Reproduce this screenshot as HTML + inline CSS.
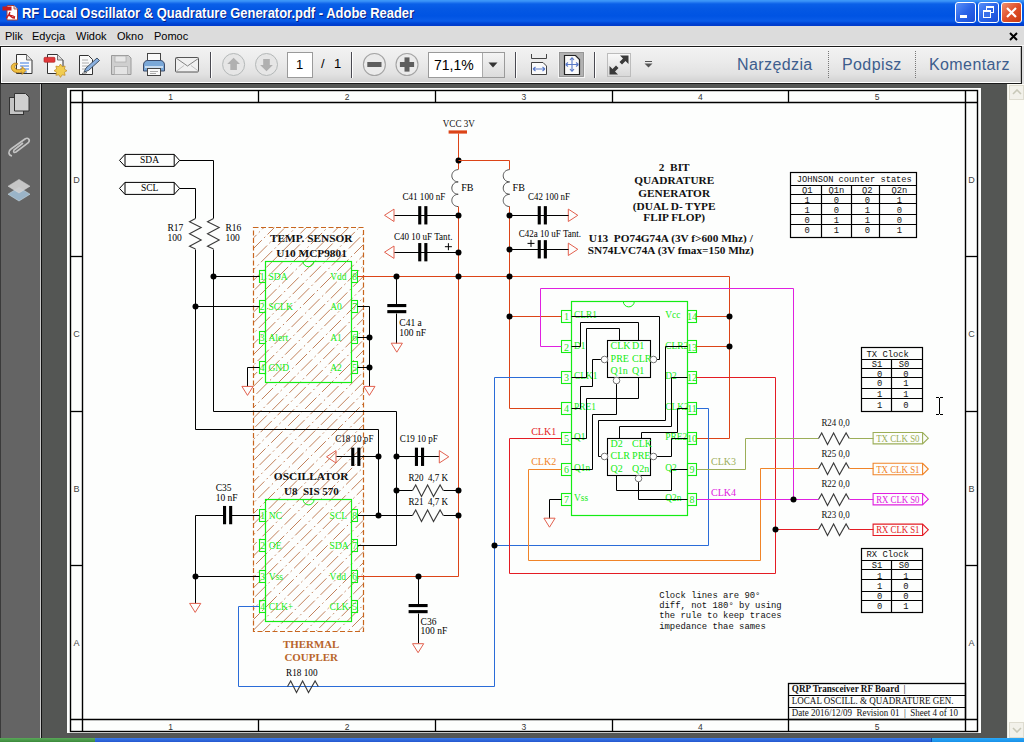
<!DOCTYPE html>
<html><head><meta charset="utf-8">
<style>
html,body{margin:0;padding:0;width:1024px;height:742px;overflow:hidden;background:#545654;font-family:"Liberation Sans",sans-serif;}
.abs{position:absolute;}
#title{left:0;top:0;width:1024px;height:26px;background:linear-gradient(#3c96f8 0px,#3c96f8 1px,#2a80f2 2px,#0a60e8 4px,#0458e4 9px,#0054e3 16px,#0a5ce8 21px,#0048d8 23px,#003ccc 25px,#003ccc 26px);}
#title .t{left:22px;top:5px;color:#fff;font-weight:bold;font-size:14px;text-shadow:1px 1px 0 #0a1e80;white-space:nowrap;transform:scaleX(0.926);transform-origin:0 0;}
#menu{left:0;top:26px;width:1024px;height:19px;background:#dcdcdc;}
#menu span{position:absolute;top:4px;font-size:11px;color:#000;}
#tbw{left:0;top:45px;width:1024px;height:1px;background:#f6f6f6;}
#tb{left:0;top:46px;width:1022px;height:38px;background:linear-gradient(#f2f2f2 0,#ebebeb 40%,#e2e2e2 75%,#d0d0d0 100%);border:1px solid #1a1a1a;box-sizing:border-box;}
#tbin{left:1px;top:47px;width:1020px;height:36px;border:1px solid #fff;border-right-color:#bbb;box-sizing:border-box;}
#left{left:0;top:84px;width:40px;height:654px;background:#646464;}
#leftl{left:40px;top:84px;width:1px;height:654px;background:#c8c8c8;}
#leftk{left:41px;top:84px;width:1px;height:654px;background:#111;}
#page{left:67px;top:88px;width:914px;height:645px;background:#fdfefd;}
#sb{left:1007px;top:84px;width:17px;height:654px;background:#fcfcf6;border-left:1px solid #eeeee6;box-sizing:border-box;}
#task{left:0;top:738px;width:1024px;height:4px;background:linear-gradient(#3a7ae8,#2458d0);}
#start{left:0;top:738px;width:95px;height:4px;background:linear-gradient(#5aa85a,#3a8a3a);}
.sep{position:absolute;top:52px;width:1px;height:26px;background:#4a4a52;border-right:1px solid #fff;}
.dsep{position:absolute;top:51px;width:0;height:27px;border-left:1px dotted #777;}
.rt{position:absolute;top:56px;font-size:16px;letter-spacing:0.4px;color:#3d5d8d;}
</style></head><body>
<div id="title" class="abs">
  <svg class="abs" style="left:2px;top:4px" width="17" height="17" viewBox="0 0 17 17">
    <path d="M5 1.5h7l3.5 3.5v11h-10.5z" fill="#fff" stroke="#a04040" stroke-width="1"/>
    <path d="M12 1.5v3.5h3.5" fill="#ddd" stroke="#a04040" stroke-width="0.8"/>
    <rect x="0.5" y="2.5" width="9" height="4" fill="#c81a1a"/>
    <path d="M7 9c1 4 3 5 6 5M8 8c-1 3-2 5-4 6M5 12c3-1 5-1 8 1" fill="none" stroke="#c81a1a" stroke-width="1.3"/>
  </svg>
  <div class="t abs">RF Local Oscillator &amp; Quadrature Generator.pdf - Adobe Reader</div>
  <!-- window buttons -->
  <div class="abs" style="left:955px;top:2px;width:21px;height:21px;border:1px solid #fff;border-radius:3px;box-sizing:border-box;background:linear-gradient(135deg,#5a90f8,#2a64e8 50%,#1a4ed8);">
    <div class="abs" style="left:4px;top:12px;width:7px;height:3px;background:#fff"></div>
  </div>
  <div class="abs" style="left:978px;top:2px;width:21px;height:21px;border:1px solid #fff;border-radius:3px;box-sizing:border-box;background:linear-gradient(135deg,#5a90f8,#2a64e8 50%,#1a4ed8);">
    <div class="abs" style="left:7px;top:3px;width:8px;height:7px;border:1px solid #fff;border-top-width:2px;box-sizing:border-box"></div>
    <div class="abs" style="left:4px;top:7px;width:8px;height:8px;border:1px solid #fff;border-top-width:2px;box-sizing:border-box;background:#3a70ea"></div>
  </div>
  <div class="abs" style="left:1001px;top:2px;width:21px;height:21px;border:1px solid #fff;border-radius:3px;box-sizing:border-box;background:linear-gradient(135deg,#f09070,#e0502a 50%,#c83a10);">
    <svg class="abs" style="left:3px;top:3px" width="13" height="13"><path d="M2 2L11 11M11 2L2 11" stroke="#fff" stroke-width="2.2"/></svg>
  </div>
</div>
<div id="menu" class="abs">
  <span style="left:5px">Plik</span><span style="left:32px">Edycja</span><span style="left:76px">Widok</span><span style="left:117px">Okno</span><span style="left:154px">Pomoc</span>
  <svg class="abs" style="left:1009px;top:6px" width="9" height="9"><path d="M1 1L8 8M8 1L1 8" stroke="#000" stroke-width="2"/></svg>
</div>
<div class="abs" style="left:0;top:45px;width:1024px;height:39px;background:#dedede"></div>
<div id="tbw" class="abs"></div>
<div id="tb" class="abs"></div>
<div id="tbin" class="abs"></div>
<!-- toolbar icons -->
<svg class="abs" style="left:0;top:46px" width="1024" height="38" viewBox="0 46 1024 38">
  <!-- open -->
  <path d="M16.5 54.5h10l5.5 5.5v13.5h-15.5z" fill="#fafafa" stroke="#333" stroke-width="1"/>
  <path d="M26.5 54.5v5.5h5.5" fill="#ddd" stroke="#555" stroke-width="0.8"/>
  <path d="M20 63h9M20 66h9M20 69h9M21 72h6" stroke="#3a7ae0" stroke-width="1.1"/>
  <path d="M15 63c-4 1-5 5-2 8 2 2 6 2 9 1v2.5l4-4-4-4v2.5c-3 1-6 1-7-1-1-2 1-4 3-4z" fill="#f0c040" stroke="#b07818" stroke-width="0.8"/>
  <!-- create -->
  <path d="M47.5 54.5h10l5.5 5.5v13.5h-15.5z" fill="#fafafa" stroke="#333" stroke-width="1"/>
  <path d="M57.5 54.5v5.5h5.5" fill="#ddd" stroke="#555" stroke-width="0.8"/>
  <rect x="44" y="57.3" width="11" height="5" rx="1" fill="#e0383a" stroke="#a82020" stroke-width="0.6"/>
  <path d="M60.5 64l1.6 2.6 3-0.5-0.7 3 2.6 1.6-2.6 1.6 0.7 3-3-0.5-1.6 2.6-1.6-2.6-3 0.5 0.7-3-2.6-1.6 2.6-1.6-0.7-3 3 0.5z" fill="#f0cc50" stroke="#c08a20" stroke-width="0.7"/>
  <!-- edit -->
  <path d="M79.5 55.5h9l4 4v15h-13z" fill="#fafafa" stroke="#333" stroke-width="1"/>
  <path d="M82 60h6M82 63h7M82 66h6M82 69h5" stroke="#999" stroke-width="0.8"/>
  <path d="M84 72l2-4 11-10 2.5 2.5-11 10z" fill="#8ab0e0" stroke="#345" stroke-width="0.9"/>
  <path d="M82 73.5c2-1 3 0 5-1" stroke="#333" stroke-width="0.8" fill="none"/>
  <!-- save disabled -->
  <path d="M111.5 55.5h17l2.5 2.5v16.5h-19.5z" fill="#cfcfcf" stroke="#9a9a9a" stroke-width="1"/>
  <rect x="115" y="56" width="11" height="6" fill="#e8e8e8" stroke="#aaa" stroke-width="0.7"/>
  <rect x="114.5" y="66.5" width="13" height="8" fill="#e4e4e4" stroke="#aaa" stroke-width="0.7"/>
  <!-- print -->
  <rect x="147.5" y="53.5" width="13" height="8" fill="#fafafa" stroke="#444" stroke-width="1"/>
  <path d="M143.5 65c0-3 2-4.5 4-4.5h13c2 0 4 1.5 4 4.5v6h-21z" fill="#7aa8d8" stroke="#3a4a6a" stroke-width="1"/>
  <rect x="145" y="66" width="18" height="2" fill="#c8dcf0"/>
  <rect x="147.5" y="68.5" width="13" height="7" fill="#fafafa" stroke="#444" stroke-width="1"/>
  <path d="M150 71.5h8M150 73.5h6" stroke="#888" stroke-width="0.7"/>
  <!-- mail -->
  <rect x="175.5" y="57.5" width="23" height="14.5" rx="1" fill="#f0f0f0" stroke="#555" stroke-width="1"/>
  <path d="M176 58l11.5 8 11.5-8" fill="none" stroke="#777" stroke-width="0.9"/>
  <path d="M176 71.5l8-6M199 71.5l-8-6" fill="none" stroke="#aaa" stroke-width="0.7"/>
  <!-- nav circles -->
  <circle cx="233.6" cy="64.5" r="11" fill="#e6e6e6" stroke="#b4b8b8" stroke-width="1"/>
  <path d="M233.6 57.8l-6.4 6.2h3.1v6h6.6v-6h3.1z" fill="#b0b0b0"/>
  <circle cx="266.5" cy="64.5" r="11" fill="#e6e6e6" stroke="#b4b8b8" stroke-width="1"/>
  <path d="M266.5 71.2l-6.4-6.2h3.1v-6h6.6v6h3.1z" fill="#b0b0b0"/>
  <!-- zoom circles -->
  <circle cx="374.4" cy="64.5" r="11" fill="#ebebeb" stroke="#a4a4a4" stroke-width="1.1"/>
  <rect x="367.3" y="62" width="14.2" height="5" fill="#5e5e5e"/>
  <circle cx="407" cy="64.5" r="11" fill="#ebebeb" stroke="#a4a4a4" stroke-width="1.1"/>
  <rect x="399.9" y="62" width="14.2" height="5" fill="#5e5e5e"/>
  <rect x="404.5" y="57.4" width="5" height="14.2" fill="#5e5e5e"/>
  <!-- fit width -->
  <path d="M531.5 54v4.5h15v-4.5" fill="none" stroke="#444" stroke-width="1"/>
  <path d="M531.5 74.5v-12h11.5l3.5 3.5v8.5z" fill="#fafafa" stroke="#444" stroke-width="1"/>
  <path d="M533 69h12M533 69l2.5-2M533 69l2.5 2M545 69l-2.5-2M545 69l-2.5 2" stroke="#5a7ac8" stroke-width="1.1" fill="none"/>
  <!-- fit page selected -->
  <rect x="558.5" y="51.5" width="26" height="26" fill="#a8a8a8" stroke="#f4f4f4" stroke-width="1"/>
  <rect x="559.5" y="52.5" width="24" height="24" fill="#b2b2b2" stroke="#888" stroke-width="0.6"/>
  <path d="M564.5 55.5h11l4 4v15h-15z" fill="#fafafa" stroke="#222" stroke-width="1.2"/>
  <path d="M572 57.5v14M565.5 64.5h13M572 57.5l-2 2.5M572 57.5l2 2.5M572 71.5l-2-2.5M572 71.5l2-2.5M565.5 64.5l2.5-2M565.5 64.5l2.5 2M578.5 64.5l-2.5-2M578.5 64.5l-2.5 2" stroke="#5a7ac8" stroke-width="1.1" fill="none"/>
  <!-- fullscreen -->
  <rect x="607.5" y="53.5" width="23" height="23" fill="url(#fsg)" stroke="#bcbcbc" stroke-width="1"/>
  <defs><linearGradient id="fsg" x1="0" y1="0" x2="0" y2="1"><stop offset="0" stop-color="#fafafa"/><stop offset="1" stop-color="#d8d8d8"/></linearGradient></defs>
  <path d="M620 55.5h8.5v8.5l-3-3-3.5 3.5-2.5-2.5 3.5-3.5z" fill="#3a3a3a"/>
  <path d="M618 74.5h-8.5v-8.5l3 3 3.5-3.5 2.5 2.5-3.5 3.5z" fill="#3a3a3a"/>
  <!-- small dropdown -->
  <path d="M645 61.5h7" stroke="#555" stroke-width="1"/>
  <path d="M644.5 63.5h8l-4 4z" fill="#555"/>
</svg>
<div class="sep" style="left:210px"></div>
<div class="sep" style="left:351px"></div>
<div class="sep" style="left:515px"></div>
<div class="sep" style="left:594px"></div>
<!-- page number box -->
<div class="abs" style="left:287px;top:52px;width:26px;height:26px;background:#fff;border:1px solid #9a9a9a;box-sizing:border-box;font-size:13px;line-height:24px;padding-left:8px;">1</div>
<div class="abs" style="left:321px;top:56px;font-size:13px;">/</div>
<div class="abs" style="left:334px;top:56px;font-size:13px;">1</div>
<!-- zoom box -->
<div class="abs" style="left:428px;top:52px;width:77px;height:26px;background:#fff;border:1px solid #9a9a9a;box-sizing:border-box;font-size:14px;line-height:24px;padding-left:5px;color:#000;">71,1%</div>
<div class="abs" style="left:482px;top:53px;width:22px;height:24px;background:linear-gradient(#f4f4f4,#dcdcdc);border-left:1px solid #aaa;box-sizing:border-box;"></div>
<svg class="abs" style="left:488px;top:62px" width="10" height="6"><path d="M0.5 0.5h9l-4.5 5z" fill="#333"/></svg>
<div class="rt" style="left:737px">Narzędzia</div>
<div class="dsep" style="left:828px"></div>
<div class="rt" style="left:842px">Podpisz</div>
<div class="dsep" style="left:915px"></div>
<div class="rt" style="left:929px">Komentarz</div>

<div id="left" class="abs"></div>
<div class="abs" style="left:0;top:84px;width:1px;height:654px;background:#3a3a3a"></div>
<div id="leftl" class="abs"></div>
<div id="leftk" class="abs"></div>
<svg class="abs" style="left:0;top:84px" width="40" height="130" viewBox="0 84 40 130">
  <rect x="9.5" y="97.5" width="14" height="17" fill="#c4c4c4" stroke="#333" stroke-width="1"/>
  <path d="M14.5 93.5h11l3.5 3.5v14h-14.5z" fill="#cfcfcf" stroke="#333" stroke-width="1"/>
  <path d="M12 156c-4-1-4-5-1-7l14-10c3-2 6 1 3 4l-12 9c-2 1-3 0-2-2l9-7" fill="none" stroke="#c4c4c4" stroke-width="1.6"/>
  <path d="M19 201l11-6.8-11-6.8-11 6.8z" fill="#9ab4c8" stroke="#c8d8e0" stroke-width="0.6"/>
  <path d="M19 193l11-6.8-11-6.8-11 6.8z" fill="#cfcfcf" opacity="0.92" stroke="#e0e0e0" stroke-width="0.5"/>
</svg>

<div id="page" class="abs"></div>
<svg class="abs" style="left:0;top:0" width="1024" height="742" viewBox="0 0 1024 742"><rect x="70.50" y="90.50" width="907.00" height="641.00" fill="none" stroke="#000" stroke-width="1.4" />
<line x1="70.50" y1="102.50" x2="977.50" y2="102.50" stroke="#000" stroke-width="1.4"/>
<line x1="70.50" y1="719.50" x2="977.50" y2="719.50" stroke="#000" stroke-width="1.4"/>
<line x1="82.50" y1="90.50" x2="82.50" y2="731.50" stroke="#000" stroke-width="1.4"/>
<line x1="965.50" y1="90.50" x2="965.50" y2="731.50" stroke="#000" stroke-width="1.4"/>
<line x1="258.50" y1="90.50" x2="258.50" y2="102.50" stroke="#000" stroke-width="1.3"/>
<line x1="258.50" y1="719.50" x2="258.50" y2="731.50" stroke="#000" stroke-width="1.3"/>
<line x1="435.50" y1="90.50" x2="435.50" y2="102.50" stroke="#000" stroke-width="1.3"/>
<line x1="435.50" y1="719.50" x2="435.50" y2="731.50" stroke="#000" stroke-width="1.3"/>
<line x1="612.50" y1="90.50" x2="612.50" y2="102.50" stroke="#000" stroke-width="1.3"/>
<line x1="612.50" y1="719.50" x2="612.50" y2="731.50" stroke="#000" stroke-width="1.3"/>
<line x1="788.50" y1="90.50" x2="788.50" y2="102.50" stroke="#000" stroke-width="1.3"/>
<line x1="788.50" y1="719.50" x2="788.50" y2="731.50" stroke="#000" stroke-width="1.3"/>
<line x1="70.50" y1="256.50" x2="82.50" y2="256.50" stroke="#000" stroke-width="1.3"/>
<line x1="965.50" y1="256.50" x2="977.50" y2="256.50" stroke="#000" stroke-width="1.3"/>
<line x1="70.50" y1="411.50" x2="82.50" y2="411.50" stroke="#000" stroke-width="1.3"/>
<line x1="965.50" y1="411.50" x2="977.50" y2="411.50" stroke="#000" stroke-width="1.3"/>
<line x1="70.50" y1="565.50" x2="82.50" y2="565.50" stroke="#000" stroke-width="1.3"/>
<line x1="965.50" y1="565.50" x2="977.50" y2="565.50" stroke="#000" stroke-width="1.3"/>
<text x="170.60" y="99.80" font-family="Liberation Sans" font-size="8.5" fill="#333" text-anchor="middle" style="white-space:pre" >1</text>
<text x="170.60" y="729.60" font-family="Liberation Sans" font-size="8.5" fill="#333" text-anchor="middle" style="white-space:pre" >1</text>
<text x="347.20" y="99.80" font-family="Liberation Sans" font-size="8.5" fill="#333" text-anchor="middle" style="white-space:pre" >2</text>
<text x="347.20" y="729.60" font-family="Liberation Sans" font-size="8.5" fill="#333" text-anchor="middle" style="white-space:pre" >2</text>
<text x="523.80" y="99.80" font-family="Liberation Sans" font-size="8.5" fill="#333" text-anchor="middle" style="white-space:pre" >3</text>
<text x="523.80" y="729.60" font-family="Liberation Sans" font-size="8.5" fill="#333" text-anchor="middle" style="white-space:pre" >3</text>
<text x="700.40" y="99.80" font-family="Liberation Sans" font-size="8.5" fill="#333" text-anchor="middle" style="white-space:pre" >4</text>
<text x="700.40" y="729.60" font-family="Liberation Sans" font-size="8.5" fill="#333" text-anchor="middle" style="white-space:pre" >4</text>
<text x="877.10" y="99.80" font-family="Liberation Sans" font-size="8.5" fill="#333" text-anchor="middle" style="white-space:pre" >5</text>
<text x="877.10" y="729.60" font-family="Liberation Sans" font-size="8.5" fill="#333" text-anchor="middle" style="white-space:pre" >5</text>
<text x="76.50" y="182.90" font-family="Liberation Sans" font-size="9" fill="#444" text-anchor="middle" style="white-space:pre" >D</text>
<text x="971.60" y="182.90" font-family="Liberation Sans" font-size="9" fill="#444" text-anchor="middle" style="white-space:pre" >D</text>
<text x="76.50" y="337.30" font-family="Liberation Sans" font-size="9" fill="#444" text-anchor="middle" style="white-space:pre" >C</text>
<text x="971.60" y="337.30" font-family="Liberation Sans" font-size="9" fill="#444" text-anchor="middle" style="white-space:pre" >C</text>
<text x="76.50" y="491.50" font-family="Liberation Sans" font-size="9" fill="#444" text-anchor="middle" style="white-space:pre" >B</text>
<text x="971.60" y="491.50" font-family="Liberation Sans" font-size="9" fill="#444" text-anchor="middle" style="white-space:pre" >B</text>
<text x="76.50" y="645.80" font-family="Liberation Sans" font-size="9" fill="#444" text-anchor="middle" style="white-space:pre" >A</text>
<text x="971.60" y="645.80" font-family="Liberation Sans" font-size="9" fill="#444" text-anchor="middle" style="white-space:pre" >A</text>
<defs><pattern id="hatch" patternUnits="userSpaceOnUse" width="10.6" height="10.6" patternTransform="rotate(45 253 227)"><line x1="0" y1="0" x2="0" y2="10.6" stroke="#be7a52" stroke-width="1.1" stroke-dasharray="4.5 2 1 2" /></pattern><clipPath id="tclip"><rect x="253.4" y="227.4" width="110.2" height="403.8"/></clipPath></defs>
<g clip-path="url(#tclip)">
<line x1="-786.40" y1="631.20" x2="-382.60" y2="227.40" stroke="#be7a52" stroke-width="0.95" stroke-dasharray="16 3.2 1.6 3.2" stroke-dashoffset="4.10"/>
<line x1="-775.80" y1="631.20" x2="-372.00" y2="227.40" stroke="#be7a52" stroke-width="0.95" stroke-dasharray="16 3.2 1.6 3.2" stroke-dashoffset="11.60"/>
<line x1="-765.20" y1="631.20" x2="-361.40" y2="227.40" stroke="#be7a52" stroke-width="0.95" stroke-dasharray="16 3.2 1.6 3.2" stroke-dashoffset="19.10"/>
<line x1="-754.60" y1="631.20" x2="-350.80" y2="227.40" stroke="#be7a52" stroke-width="0.95" stroke-dasharray="16 3.2 1.6 3.2" stroke-dashoffset="2.70"/>
<line x1="-744.00" y1="631.20" x2="-340.20" y2="227.40" stroke="#be7a52" stroke-width="0.95" stroke-dasharray="16 3.2 1.6 3.2" stroke-dashoffset="10.20"/>
<line x1="-733.40" y1="631.20" x2="-329.60" y2="227.40" stroke="#be7a52" stroke-width="0.95" stroke-dasharray="16 3.2 1.6 3.2" stroke-dashoffset="17.70"/>
<line x1="-722.80" y1="631.20" x2="-319.00" y2="227.40" stroke="#be7a52" stroke-width="0.95" stroke-dasharray="16 3.2 1.6 3.2" stroke-dashoffset="1.30"/>
<line x1="-712.20" y1="631.20" x2="-308.40" y2="227.40" stroke="#be7a52" stroke-width="0.95" stroke-dasharray="16 3.2 1.6 3.2" stroke-dashoffset="8.80"/>
<line x1="-701.60" y1="631.20" x2="-297.80" y2="227.40" stroke="#be7a52" stroke-width="0.95" stroke-dasharray="16 3.2 1.6 3.2" stroke-dashoffset="16.30"/>
<line x1="-691.00" y1="631.20" x2="-287.20" y2="227.40" stroke="#be7a52" stroke-width="0.95" stroke-dasharray="16 3.2 1.6 3.2" stroke-dashoffset="23.80"/>
<line x1="-680.40" y1="631.20" x2="-276.60" y2="227.40" stroke="#be7a52" stroke-width="0.95" stroke-dasharray="16 3.2 1.6 3.2" stroke-dashoffset="7.40"/>
<line x1="-669.80" y1="631.20" x2="-266.00" y2="227.40" stroke="#be7a52" stroke-width="0.95" stroke-dasharray="16 3.2 1.6 3.2" stroke-dashoffset="14.90"/>
<line x1="-659.20" y1="631.20" x2="-255.40" y2="227.40" stroke="#be7a52" stroke-width="0.95" stroke-dasharray="16 3.2 1.6 3.2" stroke-dashoffset="22.40"/>
<line x1="-648.60" y1="631.20" x2="-244.80" y2="227.40" stroke="#be7a52" stroke-width="0.95" stroke-dasharray="16 3.2 1.6 3.2" stroke-dashoffset="6.00"/>
<line x1="-638.00" y1="631.20" x2="-234.20" y2="227.40" stroke="#be7a52" stroke-width="0.95" stroke-dasharray="16 3.2 1.6 3.2" stroke-dashoffset="13.50"/>
<line x1="-627.40" y1="631.20" x2="-223.60" y2="227.40" stroke="#be7a52" stroke-width="0.95" stroke-dasharray="16 3.2 1.6 3.2" stroke-dashoffset="21.00"/>
<line x1="-616.80" y1="631.20" x2="-213.00" y2="227.40" stroke="#be7a52" stroke-width="0.95" stroke-dasharray="16 3.2 1.6 3.2" stroke-dashoffset="4.60"/>
<line x1="-606.20" y1="631.20" x2="-202.40" y2="227.40" stroke="#be7a52" stroke-width="0.95" stroke-dasharray="16 3.2 1.6 3.2" stroke-dashoffset="12.10"/>
<line x1="-595.60" y1="631.20" x2="-191.80" y2="227.40" stroke="#be7a52" stroke-width="0.95" stroke-dasharray="16 3.2 1.6 3.2" stroke-dashoffset="19.60"/>
<line x1="-585.00" y1="631.20" x2="-181.20" y2="227.40" stroke="#be7a52" stroke-width="0.95" stroke-dasharray="16 3.2 1.6 3.2" stroke-dashoffset="3.20"/>
<line x1="-574.40" y1="631.20" x2="-170.60" y2="227.40" stroke="#be7a52" stroke-width="0.95" stroke-dasharray="16 3.2 1.6 3.2" stroke-dashoffset="10.70"/>
<line x1="-563.80" y1="631.20" x2="-160.00" y2="227.40" stroke="#be7a52" stroke-width="0.95" stroke-dasharray="16 3.2 1.6 3.2" stroke-dashoffset="18.20"/>
<line x1="-553.20" y1="631.20" x2="-149.40" y2="227.40" stroke="#be7a52" stroke-width="0.95" stroke-dasharray="16 3.2 1.6 3.2" stroke-dashoffset="1.80"/>
<line x1="-542.60" y1="631.20" x2="-138.80" y2="227.40" stroke="#be7a52" stroke-width="0.95" stroke-dasharray="16 3.2 1.6 3.2" stroke-dashoffset="9.30"/>
<line x1="-532.00" y1="631.20" x2="-128.20" y2="227.40" stroke="#be7a52" stroke-width="0.95" stroke-dasharray="16 3.2 1.6 3.2" stroke-dashoffset="16.80"/>
<line x1="-521.40" y1="631.20" x2="-117.60" y2="227.40" stroke="#be7a52" stroke-width="0.95" stroke-dasharray="16 3.2 1.6 3.2" stroke-dashoffset="0.40"/>
<line x1="-510.80" y1="631.20" x2="-107.00" y2="227.40" stroke="#be7a52" stroke-width="0.95" stroke-dasharray="16 3.2 1.6 3.2" stroke-dashoffset="7.90"/>
<line x1="-500.20" y1="631.20" x2="-96.40" y2="227.40" stroke="#be7a52" stroke-width="0.95" stroke-dasharray="16 3.2 1.6 3.2" stroke-dashoffset="15.40"/>
<line x1="-489.60" y1="631.20" x2="-85.80" y2="227.40" stroke="#be7a52" stroke-width="0.95" stroke-dasharray="16 3.2 1.6 3.2" stroke-dashoffset="22.90"/>
<line x1="-479.00" y1="631.20" x2="-75.20" y2="227.40" stroke="#be7a52" stroke-width="0.95" stroke-dasharray="16 3.2 1.6 3.2" stroke-dashoffset="6.50"/>
<line x1="-468.40" y1="631.20" x2="-64.60" y2="227.40" stroke="#be7a52" stroke-width="0.95" stroke-dasharray="16 3.2 1.6 3.2" stroke-dashoffset="14.00"/>
<line x1="-457.80" y1="631.20" x2="-54.00" y2="227.40" stroke="#be7a52" stroke-width="0.95" stroke-dasharray="16 3.2 1.6 3.2" stroke-dashoffset="21.50"/>
<line x1="-447.20" y1="631.20" x2="-43.40" y2="227.40" stroke="#be7a52" stroke-width="0.95" stroke-dasharray="16 3.2 1.6 3.2" stroke-dashoffset="5.10"/>
<line x1="-436.60" y1="631.20" x2="-32.80" y2="227.40" stroke="#be7a52" stroke-width="0.95" stroke-dasharray="16 3.2 1.6 3.2" stroke-dashoffset="12.60"/>
<line x1="-426.00" y1="631.20" x2="-22.20" y2="227.40" stroke="#be7a52" stroke-width="0.95" stroke-dasharray="16 3.2 1.6 3.2" stroke-dashoffset="20.10"/>
<line x1="-415.40" y1="631.20" x2="-11.60" y2="227.40" stroke="#be7a52" stroke-width="0.95" stroke-dasharray="16 3.2 1.6 3.2" stroke-dashoffset="3.70"/>
<line x1="-404.80" y1="631.20" x2="-1.00" y2="227.40" stroke="#be7a52" stroke-width="0.95" stroke-dasharray="16 3.2 1.6 3.2" stroke-dashoffset="11.20"/>
<line x1="-394.20" y1="631.20" x2="9.60" y2="227.40" stroke="#be7a52" stroke-width="0.95" stroke-dasharray="16 3.2 1.6 3.2" stroke-dashoffset="18.70"/>
<line x1="-383.60" y1="631.20" x2="20.20" y2="227.40" stroke="#be7a52" stroke-width="0.95" stroke-dasharray="16 3.2 1.6 3.2" stroke-dashoffset="2.30"/>
<line x1="-373.00" y1="631.20" x2="30.80" y2="227.40" stroke="#be7a52" stroke-width="0.95" stroke-dasharray="16 3.2 1.6 3.2" stroke-dashoffset="9.80"/>
<line x1="-362.40" y1="631.20" x2="41.40" y2="227.40" stroke="#be7a52" stroke-width="0.95" stroke-dasharray="16 3.2 1.6 3.2" stroke-dashoffset="17.30"/>
<line x1="-351.80" y1="631.20" x2="52.00" y2="227.40" stroke="#be7a52" stroke-width="0.95" stroke-dasharray="16 3.2 1.6 3.2" stroke-dashoffset="0.90"/>
<line x1="-341.20" y1="631.20" x2="62.60" y2="227.40" stroke="#be7a52" stroke-width="0.95" stroke-dasharray="16 3.2 1.6 3.2" stroke-dashoffset="8.40"/>
<line x1="-330.60" y1="631.20" x2="73.20" y2="227.40" stroke="#be7a52" stroke-width="0.95" stroke-dasharray="16 3.2 1.6 3.2" stroke-dashoffset="15.90"/>
<line x1="-320.00" y1="631.20" x2="83.80" y2="227.40" stroke="#be7a52" stroke-width="0.95" stroke-dasharray="16 3.2 1.6 3.2" stroke-dashoffset="23.40"/>
<line x1="-309.40" y1="631.20" x2="94.40" y2="227.40" stroke="#be7a52" stroke-width="0.95" stroke-dasharray="16 3.2 1.6 3.2" stroke-dashoffset="7.00"/>
<line x1="-298.80" y1="631.20" x2="105.00" y2="227.40" stroke="#be7a52" stroke-width="0.95" stroke-dasharray="16 3.2 1.6 3.2" stroke-dashoffset="14.50"/>
<line x1="-288.20" y1="631.20" x2="115.60" y2="227.40" stroke="#be7a52" stroke-width="0.95" stroke-dasharray="16 3.2 1.6 3.2" stroke-dashoffset="22.00"/>
<line x1="-277.60" y1="631.20" x2="126.20" y2="227.40" stroke="#be7a52" stroke-width="0.95" stroke-dasharray="16 3.2 1.6 3.2" stroke-dashoffset="5.60"/>
<line x1="-267.00" y1="631.20" x2="136.80" y2="227.40" stroke="#be7a52" stroke-width="0.95" stroke-dasharray="16 3.2 1.6 3.2" stroke-dashoffset="13.10"/>
<line x1="-256.40" y1="631.20" x2="147.40" y2="227.40" stroke="#be7a52" stroke-width="0.95" stroke-dasharray="16 3.2 1.6 3.2" stroke-dashoffset="20.60"/>
<line x1="-245.80" y1="631.20" x2="158.00" y2="227.40" stroke="#be7a52" stroke-width="0.95" stroke-dasharray="16 3.2 1.6 3.2" stroke-dashoffset="4.20"/>
<line x1="-235.20" y1="631.20" x2="168.60" y2="227.40" stroke="#be7a52" stroke-width="0.95" stroke-dasharray="16 3.2 1.6 3.2" stroke-dashoffset="11.70"/>
<line x1="-224.60" y1="631.20" x2="179.20" y2="227.40" stroke="#be7a52" stroke-width="0.95" stroke-dasharray="16 3.2 1.6 3.2" stroke-dashoffset="19.20"/>
<line x1="-214.00" y1="631.20" x2="189.80" y2="227.40" stroke="#be7a52" stroke-width="0.95" stroke-dasharray="16 3.2 1.6 3.2" stroke-dashoffset="2.80"/>
<line x1="-203.40" y1="631.20" x2="200.40" y2="227.40" stroke="#be7a52" stroke-width="0.95" stroke-dasharray="16 3.2 1.6 3.2" stroke-dashoffset="10.30"/>
<line x1="-192.80" y1="631.20" x2="211.00" y2="227.40" stroke="#be7a52" stroke-width="0.95" stroke-dasharray="16 3.2 1.6 3.2" stroke-dashoffset="17.80"/>
<line x1="-182.20" y1="631.20" x2="221.60" y2="227.40" stroke="#be7a52" stroke-width="0.95" stroke-dasharray="16 3.2 1.6 3.2" stroke-dashoffset="1.40"/>
<line x1="-171.60" y1="631.20" x2="232.20" y2="227.40" stroke="#be7a52" stroke-width="0.95" stroke-dasharray="16 3.2 1.6 3.2" stroke-dashoffset="8.90"/>
<line x1="-161.00" y1="631.20" x2="242.80" y2="227.40" stroke="#be7a52" stroke-width="0.95" stroke-dasharray="16 3.2 1.6 3.2" stroke-dashoffset="16.40"/>
<line x1="-150.40" y1="631.20" x2="253.40" y2="227.40" stroke="#be7a52" stroke-width="0.95" stroke-dasharray="16 3.2 1.6 3.2" stroke-dashoffset="0.00"/>
<line x1="-139.80" y1="631.20" x2="264.00" y2="227.40" stroke="#be7a52" stroke-width="0.95" stroke-dasharray="16 3.2 1.6 3.2" stroke-dashoffset="7.50"/>
<line x1="-129.20" y1="631.20" x2="274.60" y2="227.40" stroke="#be7a52" stroke-width="0.95" stroke-dasharray="16 3.2 1.6 3.2" stroke-dashoffset="15.00"/>
<line x1="-118.60" y1="631.20" x2="285.20" y2="227.40" stroke="#be7a52" stroke-width="0.95" stroke-dasharray="16 3.2 1.6 3.2" stroke-dashoffset="22.50"/>
<line x1="-108.00" y1="631.20" x2="295.80" y2="227.40" stroke="#be7a52" stroke-width="0.95" stroke-dasharray="16 3.2 1.6 3.2" stroke-dashoffset="6.10"/>
<line x1="-97.40" y1="631.20" x2="306.40" y2="227.40" stroke="#be7a52" stroke-width="0.95" stroke-dasharray="16 3.2 1.6 3.2" stroke-dashoffset="13.60"/>
<line x1="-86.80" y1="631.20" x2="317.00" y2="227.40" stroke="#be7a52" stroke-width="0.95" stroke-dasharray="16 3.2 1.6 3.2" stroke-dashoffset="21.10"/>
<line x1="-76.20" y1="631.20" x2="327.60" y2="227.40" stroke="#be7a52" stroke-width="0.95" stroke-dasharray="16 3.2 1.6 3.2" stroke-dashoffset="4.70"/>
<line x1="-65.60" y1="631.20" x2="338.20" y2="227.40" stroke="#be7a52" stroke-width="0.95" stroke-dasharray="16 3.2 1.6 3.2" stroke-dashoffset="12.20"/>
<line x1="-55.00" y1="631.20" x2="348.80" y2="227.40" stroke="#be7a52" stroke-width="0.95" stroke-dasharray="16 3.2 1.6 3.2" stroke-dashoffset="19.70"/>
<line x1="-44.40" y1="631.20" x2="359.40" y2="227.40" stroke="#be7a52" stroke-width="0.95" stroke-dasharray="16 3.2 1.6 3.2" stroke-dashoffset="3.30"/>
<line x1="-33.80" y1="631.20" x2="370.00" y2="227.40" stroke="#be7a52" stroke-width="0.95" stroke-dasharray="16 3.2 1.6 3.2" stroke-dashoffset="10.80"/>
<line x1="-23.20" y1="631.20" x2="380.60" y2="227.40" stroke="#be7a52" stroke-width="0.95" stroke-dasharray="16 3.2 1.6 3.2" stroke-dashoffset="18.30"/>
<line x1="-12.60" y1="631.20" x2="391.20" y2="227.40" stroke="#be7a52" stroke-width="0.95" stroke-dasharray="16 3.2 1.6 3.2" stroke-dashoffset="1.90"/>
<line x1="-2.00" y1="631.20" x2="401.80" y2="227.40" stroke="#be7a52" stroke-width="0.95" stroke-dasharray="16 3.2 1.6 3.2" stroke-dashoffset="9.40"/>
<line x1="8.60" y1="631.20" x2="412.40" y2="227.40" stroke="#be7a52" stroke-width="0.95" stroke-dasharray="16 3.2 1.6 3.2" stroke-dashoffset="16.90"/>
<line x1="19.20" y1="631.20" x2="423.00" y2="227.40" stroke="#be7a52" stroke-width="0.95" stroke-dasharray="16 3.2 1.6 3.2" stroke-dashoffset="0.50"/>
<line x1="29.80" y1="631.20" x2="433.60" y2="227.40" stroke="#be7a52" stroke-width="0.95" stroke-dasharray="16 3.2 1.6 3.2" stroke-dashoffset="8.00"/>
<line x1="40.40" y1="631.20" x2="444.20" y2="227.40" stroke="#be7a52" stroke-width="0.95" stroke-dasharray="16 3.2 1.6 3.2" stroke-dashoffset="15.50"/>
<line x1="51.00" y1="631.20" x2="454.80" y2="227.40" stroke="#be7a52" stroke-width="0.95" stroke-dasharray="16 3.2 1.6 3.2" stroke-dashoffset="23.00"/>
<line x1="61.60" y1="631.20" x2="465.40" y2="227.40" stroke="#be7a52" stroke-width="0.95" stroke-dasharray="16 3.2 1.6 3.2" stroke-dashoffset="6.60"/>
<line x1="72.20" y1="631.20" x2="476.00" y2="227.40" stroke="#be7a52" stroke-width="0.95" stroke-dasharray="16 3.2 1.6 3.2" stroke-dashoffset="14.10"/>
<line x1="82.80" y1="631.20" x2="486.60" y2="227.40" stroke="#be7a52" stroke-width="0.95" stroke-dasharray="16 3.2 1.6 3.2" stroke-dashoffset="21.60"/>
<line x1="93.40" y1="631.20" x2="497.20" y2="227.40" stroke="#be7a52" stroke-width="0.95" stroke-dasharray="16 3.2 1.6 3.2" stroke-dashoffset="5.20"/>
<line x1="104.00" y1="631.20" x2="507.80" y2="227.40" stroke="#be7a52" stroke-width="0.95" stroke-dasharray="16 3.2 1.6 3.2" stroke-dashoffset="12.70"/>
<line x1="114.60" y1="631.20" x2="518.40" y2="227.40" stroke="#be7a52" stroke-width="0.95" stroke-dasharray="16 3.2 1.6 3.2" stroke-dashoffset="20.20"/>
<line x1="125.20" y1="631.20" x2="529.00" y2="227.40" stroke="#be7a52" stroke-width="0.95" stroke-dasharray="16 3.2 1.6 3.2" stroke-dashoffset="3.80"/>
<line x1="135.80" y1="631.20" x2="539.60" y2="227.40" stroke="#be7a52" stroke-width="0.95" stroke-dasharray="16 3.2 1.6 3.2" stroke-dashoffset="11.30"/>
<line x1="146.40" y1="631.20" x2="550.20" y2="227.40" stroke="#be7a52" stroke-width="0.95" stroke-dasharray="16 3.2 1.6 3.2" stroke-dashoffset="18.80"/>
<line x1="157.00" y1="631.20" x2="560.80" y2="227.40" stroke="#be7a52" stroke-width="0.95" stroke-dasharray="16 3.2 1.6 3.2" stroke-dashoffset="2.40"/>
<line x1="167.60" y1="631.20" x2="571.40" y2="227.40" stroke="#be7a52" stroke-width="0.95" stroke-dasharray="16 3.2 1.6 3.2" stroke-dashoffset="9.90"/>
<line x1="178.20" y1="631.20" x2="582.00" y2="227.40" stroke="#be7a52" stroke-width="0.95" stroke-dasharray="16 3.2 1.6 3.2" stroke-dashoffset="17.40"/>
<line x1="188.80" y1="631.20" x2="592.60" y2="227.40" stroke="#be7a52" stroke-width="0.95" stroke-dasharray="16 3.2 1.6 3.2" stroke-dashoffset="1.00"/>
<line x1="199.40" y1="631.20" x2="603.20" y2="227.40" stroke="#be7a52" stroke-width="0.95" stroke-dasharray="16 3.2 1.6 3.2" stroke-dashoffset="8.50"/>
<line x1="210.00" y1="631.20" x2="613.80" y2="227.40" stroke="#be7a52" stroke-width="0.95" stroke-dasharray="16 3.2 1.6 3.2" stroke-dashoffset="16.00"/>
<line x1="220.60" y1="631.20" x2="624.40" y2="227.40" stroke="#be7a52" stroke-width="0.95" stroke-dasharray="16 3.2 1.6 3.2" stroke-dashoffset="23.50"/>
<line x1="231.20" y1="631.20" x2="635.00" y2="227.40" stroke="#be7a52" stroke-width="0.95" stroke-dasharray="16 3.2 1.6 3.2" stroke-dashoffset="7.10"/>
<line x1="241.80" y1="631.20" x2="645.60" y2="227.40" stroke="#be7a52" stroke-width="0.95" stroke-dasharray="16 3.2 1.6 3.2" stroke-dashoffset="14.60"/>
<line x1="252.40" y1="631.20" x2="656.20" y2="227.40" stroke="#be7a52" stroke-width="0.95" stroke-dasharray="16 3.2 1.6 3.2" stroke-dashoffset="22.10"/>
<line x1="263.00" y1="631.20" x2="666.80" y2="227.40" stroke="#be7a52" stroke-width="0.95" stroke-dasharray="16 3.2 1.6 3.2" stroke-dashoffset="5.70"/>
<line x1="273.60" y1="631.20" x2="677.40" y2="227.40" stroke="#be7a52" stroke-width="0.95" stroke-dasharray="16 3.2 1.6 3.2" stroke-dashoffset="13.20"/>
<line x1="284.20" y1="631.20" x2="688.00" y2="227.40" stroke="#be7a52" stroke-width="0.95" stroke-dasharray="16 3.2 1.6 3.2" stroke-dashoffset="20.70"/>
<line x1="294.80" y1="631.20" x2="698.60" y2="227.40" stroke="#be7a52" stroke-width="0.95" stroke-dasharray="16 3.2 1.6 3.2" stroke-dashoffset="4.30"/>
<line x1="305.40" y1="631.20" x2="709.20" y2="227.40" stroke="#be7a52" stroke-width="0.95" stroke-dasharray="16 3.2 1.6 3.2" stroke-dashoffset="11.80"/>
<line x1="316.00" y1="631.20" x2="719.80" y2="227.40" stroke="#be7a52" stroke-width="0.95" stroke-dasharray="16 3.2 1.6 3.2" stroke-dashoffset="19.30"/>
<line x1="326.60" y1="631.20" x2="730.40" y2="227.40" stroke="#be7a52" stroke-width="0.95" stroke-dasharray="16 3.2 1.6 3.2" stroke-dashoffset="2.90"/>
<line x1="337.20" y1="631.20" x2="741.00" y2="227.40" stroke="#be7a52" stroke-width="0.95" stroke-dasharray="16 3.2 1.6 3.2" stroke-dashoffset="10.40"/>
<line x1="347.80" y1="631.20" x2="751.60" y2="227.40" stroke="#be7a52" stroke-width="0.95" stroke-dasharray="16 3.2 1.6 3.2" stroke-dashoffset="17.90"/>
<line x1="358.40" y1="631.20" x2="762.20" y2="227.40" stroke="#be7a52" stroke-width="0.95" stroke-dasharray="16 3.2 1.6 3.2" stroke-dashoffset="1.50"/>
<line x1="369.00" y1="631.20" x2="772.80" y2="227.40" stroke="#be7a52" stroke-width="0.95" stroke-dasharray="16 3.2 1.6 3.2" stroke-dashoffset="9.00"/>
<line x1="379.60" y1="631.20" x2="783.40" y2="227.40" stroke="#be7a52" stroke-width="0.95" stroke-dasharray="16 3.2 1.6 3.2" stroke-dashoffset="16.50"/>
<line x1="390.20" y1="631.20" x2="794.00" y2="227.40" stroke="#be7a52" stroke-width="0.95" stroke-dasharray="16 3.2 1.6 3.2" stroke-dashoffset="0.10"/>
<line x1="400.80" y1="631.20" x2="804.60" y2="227.40" stroke="#be7a52" stroke-width="0.95" stroke-dasharray="16 3.2 1.6 3.2" stroke-dashoffset="7.60"/>
<line x1="411.40" y1="631.20" x2="815.20" y2="227.40" stroke="#be7a52" stroke-width="0.95" stroke-dasharray="16 3.2 1.6 3.2" stroke-dashoffset="15.10"/>
<line x1="422.00" y1="631.20" x2="825.80" y2="227.40" stroke="#be7a52" stroke-width="0.95" stroke-dasharray="16 3.2 1.6 3.2" stroke-dashoffset="22.60"/>
<line x1="432.60" y1="631.20" x2="836.40" y2="227.40" stroke="#be7a52" stroke-width="0.95" stroke-dasharray="16 3.2 1.6 3.2" stroke-dashoffset="6.20"/>
<line x1="443.20" y1="631.20" x2="847.00" y2="227.40" stroke="#be7a52" stroke-width="0.95" stroke-dasharray="16 3.2 1.6 3.2" stroke-dashoffset="13.70"/>
<line x1="453.80" y1="631.20" x2="857.60" y2="227.40" stroke="#be7a52" stroke-width="0.95" stroke-dasharray="16 3.2 1.6 3.2" stroke-dashoffset="21.20"/>
<line x1="464.40" y1="631.20" x2="868.20" y2="227.40" stroke="#be7a52" stroke-width="0.95" stroke-dasharray="16 3.2 1.6 3.2" stroke-dashoffset="4.80"/>
<line x1="475.00" y1="631.20" x2="878.80" y2="227.40" stroke="#be7a52" stroke-width="0.95" stroke-dasharray="16 3.2 1.6 3.2" stroke-dashoffset="12.30"/>
</g>
<rect x="253.50" y="227.50" width="110.00" height="404.00" fill="none" stroke="#c8661e" stroke-width="1.2" stroke-dasharray="5 2.5"/>
<path d="M119.5,160.40 L125,154.40 L174.2,154.40 L179.6,160.40 L174.2,166.40 L125,166.40 Z M125,154.40 V166.40 M174.2,154.40 V166.40" fill="none" stroke="#000" stroke-width="1"/>
<text x="149.60" y="163.00" font-family="Liberation Serif" font-size="9.5" fill="#000" text-anchor="middle" style="white-space:pre" >SDA</text>
<path d="M119.5,188.40 L125,182.40 L174.2,182.40 L179.6,188.40 L174.2,194.40 L125,194.40 Z M125,182.40 V194.40 M174.2,182.40 V194.40" fill="none" stroke="#000" stroke-width="1"/>
<text x="149.60" y="191.00" font-family="Liberation Serif" font-size="9.5" fill="#000" text-anchor="middle" style="white-space:pre" >SCL</text>
<polyline points="179.50,160.50 213.50,160.50 213.50,218.50" fill="none" stroke="#000" stroke-width="1.0" />
<polyline points="213.50,218.50 207.50,221.70 219.20,227.60 207.50,233.80 219.20,239.90 207.50,246.30 213.50,249.00" fill="none" stroke="#3a3a3a" stroke-width="1.1" />
<polyline points="213.50,249.50 213.50,411.50 396.50,411.50 396.50,545.50 357.50,545.50" fill="none" stroke="#000" stroke-width="1.0" />
<polyline points="179.50,188.50 195.50,188.50 195.50,218.50" fill="none" stroke="#000" stroke-width="1.0" />
<polyline points="195.50,218.50 189.50,221.70 201.20,227.60 189.50,233.80 201.20,239.90 189.50,246.30 195.50,249.00" fill="none" stroke="#3a3a3a" stroke-width="1.1" />
<polyline points="195.50,249.50 195.50,429.50 378.50,429.50 378.50,515.50 357.50,515.50" fill="none" stroke="#000" stroke-width="1.0" />
<text x="167.50" y="231.30" font-family="Liberation Serif" font-size="9.5" fill="#000" text-anchor="start" style="white-space:pre" >R17</text>
<text x="167.50" y="241.30" font-family="Liberation Serif" font-size="9.5" fill="#000" text-anchor="start" style="white-space:pre" >100</text>
<text x="225.50" y="231.30" font-family="Liberation Serif" font-size="9.5" fill="#000" text-anchor="start" style="white-space:pre" >R16</text>
<text x="225.50" y="241.30" font-family="Liberation Serif" font-size="9.5" fill="#000" text-anchor="start" style="white-space:pre" >100</text>
<rect x="265.50" y="261.50" width="86.00" height="121.00" fill="none" stroke="#14ec14" stroke-width="1.2" />
<path d="M302.95,261.20 A5.5,5.5 0 0 0 313.95,261.20" fill="none" stroke="#14ec14" stroke-width="1"/>
<rect x="259.50" y="270.50" width="6.00" height="12.00" fill="none" stroke="#14ec14" stroke-width="1.1" />
<text x="262.20" y="280.00" font-family="Liberation Serif" font-size="9.5" fill="#14ec14" text-anchor="middle" style="white-space:pre" >1</text>
<rect x="351.50" y="270.50" width="6.00" height="12.00" fill="none" stroke="#14ec14" stroke-width="1.1" />
<text x="354.70" y="280.00" font-family="Liberation Serif" font-size="9.5" fill="#14ec14" text-anchor="middle" style="white-space:pre" >8</text>
<rect x="259.50" y="300.50" width="6.00" height="12.00" fill="none" stroke="#14ec14" stroke-width="1.1" />
<text x="262.20" y="310.40" font-family="Liberation Serif" font-size="9.5" fill="#14ec14" text-anchor="middle" style="white-space:pre" >2</text>
<rect x="351.50" y="300.50" width="6.00" height="12.00" fill="none" stroke="#14ec14" stroke-width="1.1" />
<text x="354.70" y="310.40" font-family="Liberation Serif" font-size="9.5" fill="#14ec14" text-anchor="middle" style="white-space:pre" >7</text>
<rect x="259.50" y="331.50" width="6.00" height="12.00" fill="none" stroke="#14ec14" stroke-width="1.1" />
<text x="262.20" y="340.80" font-family="Liberation Serif" font-size="9.5" fill="#14ec14" text-anchor="middle" style="white-space:pre" >3</text>
<rect x="351.50" y="331.50" width="6.00" height="12.00" fill="none" stroke="#14ec14" stroke-width="1.1" />
<text x="354.70" y="340.80" font-family="Liberation Serif" font-size="9.5" fill="#14ec14" text-anchor="middle" style="white-space:pre" >6</text>
<rect x="259.50" y="361.50" width="6.00" height="12.00" fill="none" stroke="#14ec14" stroke-width="1.1" />
<text x="262.20" y="371.20" font-family="Liberation Serif" font-size="9.5" fill="#14ec14" text-anchor="middle" style="white-space:pre" >4</text>
<rect x="351.50" y="361.50" width="6.00" height="12.00" fill="none" stroke="#14ec14" stroke-width="1.1" />
<text x="354.70" y="371.20" font-family="Liberation Serif" font-size="9.5" fill="#14ec14" text-anchor="middle" style="white-space:pre" >5</text>
<text x="268.50" y="279.80" font-family="Liberation Serif" font-size="9.5" fill="#14ec14" text-anchor="start" style="white-space:pre" >SDA</text>
<text x="268.50" y="310.20" font-family="Liberation Serif" font-size="9.5" fill="#14ec14" text-anchor="start" style="white-space:pre" >SCLK</text>
<text x="268.50" y="340.60" font-family="Liberation Serif" font-size="9.5" fill="#14ec14" text-anchor="start" style="white-space:pre" >Alert</text>
<text x="268.50" y="371.00" font-family="Liberation Serif" font-size="9.5" fill="#14ec14" text-anchor="start" style="white-space:pre" >GND</text>
<text x="330.20" y="279.80" font-family="Liberation Serif" font-size="9.5" fill="#14ec14" text-anchor="start" style="white-space:pre" >Vdd</text>
<text x="330.20" y="310.20" font-family="Liberation Serif" font-size="9.5" fill="#14ec14" text-anchor="start" style="white-space:pre" >A0</text>
<text x="330.20" y="340.60" font-family="Liberation Serif" font-size="9.5" fill="#14ec14" text-anchor="start" style="white-space:pre" >A1</text>
<text x="330.20" y="371.00" font-family="Liberation Serif" font-size="9.5" fill="#14ec14" text-anchor="start" style="white-space:pre" >A2</text>
<text x="311.20" y="242.00" font-family="Liberation Serif" font-size="11.3" fill="#111" text-anchor="middle" font-weight="bold" style="white-space:pre" >TEMP. SENSOR</text>
<text x="311.50" y="256.90" font-family="Liberation Serif" font-size="11.3" fill="#111" text-anchor="middle" font-weight="bold" style="white-space:pre" >U10 MCP9801</text>
<polyline points="259.50,276.50 213.50,276.50" fill="none" stroke="#000" stroke-width="1.0" />
<circle cx="213.50" cy="276.50" r="3.0" fill="#000"/>
<polyline points="259.50,306.50 195.50,306.50" fill="none" stroke="#000" stroke-width="1.0" />
<circle cx="195.50" cy="306.50" r="3.0" fill="#000"/>
<polyline points="259.50,367.50 247.50,367.50 247.50,386.50" fill="none" stroke="#000" stroke-width="1.0" />
<path d="M241.90,386.40 L253.10,386.40 L247.50,395.40 Z" fill="none" stroke="#e2604e" stroke-width="1"/>
<polyline points="357.50,306.50 369.50,306.50 369.50,386.50" fill="none" stroke="#000" stroke-width="1.0" />
<path d="M363.80,386.40 L375.00,386.40 L369.40,395.40 Z" fill="none" stroke="#e2604e" stroke-width="1"/>
<polyline points="357.50,337.50 369.50,337.50" fill="none" stroke="#000" stroke-width="1.0" />
<circle cx="369.50" cy="337.50" r="3.0" fill="#000"/>
<polyline points="357.50,367.50 369.50,367.50" fill="none" stroke="#000" stroke-width="1.0" />
<circle cx="369.50" cy="367.50" r="3.0" fill="#000"/>
<polyline points="396.50,276.50 396.50,304.50" fill="none" stroke="#000" stroke-width="1.0" />
<rect x="387.30" y="304.00" width="19.00" height="3.10" fill="#000"/>
<rect x="387.30" y="310.10" width="19.00" height="3.10" fill="#000"/>
<polyline points="396.50,313.50 396.50,343.50" fill="none" stroke="#000" stroke-width="1.0" />
<path d="M391.20,343.20 L402.40,343.20 L396.80,352.20 Z" fill="none" stroke="#e2604e" stroke-width="1"/>
<text x="399.30" y="325.80" font-family="Liberation Serif" font-size="9.5" fill="#000" text-anchor="start" style="white-space:pre" >C41 a</text>
<text x="399.30" y="336.00" font-family="Liberation Serif" font-size="9.5" fill="#000" text-anchor="start" style="white-space:pre" >100 nF</text>
<text x="458.80" y="127.40" font-family="Liberation Serif" font-size="9.5" fill="#111" text-anchor="middle" textLength="32" lengthAdjust="spacingAndGlyphs" style="white-space:pre" >VCC 3V</text>
<rect x="448.60" y="130.40" width="18.40" height="3.20" fill="#dc4418"/>
<polyline points="458.50,133.50 458.50,169.50" fill="none" stroke="#dc4418" stroke-width="1.0" />
<path d="M458.20,169.60 C449.70,170.10 449.70,181.43 458.20,181.93 C449.70,182.43 449.70,193.77 458.20,194.27 C449.70,194.77 449.70,206.10 458.20,206.60 " fill="none" stroke="#505050" stroke-width="1"/>
<polyline points="458.50,206.50 458.50,576.50 357.50,576.50" fill="none" stroke="#dc4418" stroke-width="1.0" />
<circle cx="458.50" cy="160.50" r="3.0" fill="#000"/>
<polyline points="458.50,160.50 509.50,160.50 509.50,169.50" fill="none" stroke="#dc4418" stroke-width="1.0" />
<path d="M509.60,169.60 C501.10,170.10 501.10,181.43 509.60,181.93 C501.10,182.43 501.10,193.77 509.60,194.27 C501.10,194.77 501.10,206.10 509.60,206.60 " fill="none" stroke="#505050" stroke-width="1"/>
<polyline points="509.50,206.50 509.50,408.50 561.50,408.50" fill="none" stroke="#dc4418" stroke-width="1.0" />
<polyline points="357.50,276.50 729.50,276.50 729.50,438.50 696.50,438.50" fill="none" stroke="#dc4418" stroke-width="1.0" />
<text x="461.20" y="191.00" font-family="Liberation Serif" font-size="10" fill="#000" text-anchor="start" style="white-space:pre" >FB</text>
<text x="512.60" y="191.00" font-family="Liberation Serif" font-size="10" fill="#000" text-anchor="start" style="white-space:pre" >FB</text>
<path d="M384.50,215.30 L394.00,209.10 L394.00,221.50 Z" fill="none" stroke="#e2604e" stroke-width="1"/>
<polyline points="394.50,215.50 458.50,215.50" fill="none" stroke="#000" stroke-width="1.0" />
<rect x="418.20" y="206.15" width="3.10" height="18.30" fill="#000"/>
<rect x="424.30" y="206.15" width="3.10" height="18.30" fill="#000"/>
<circle cx="458.50" cy="215.50" r="3.0" fill="#000"/>
<path d="M384.50,252.20 L394.00,246.00 L394.00,258.40 Z" fill="none" stroke="#e2604e" stroke-width="1"/>
<polyline points="394.50,252.50 458.50,252.50" fill="none" stroke="#000" stroke-width="1.0" />
<rect x="418.20" y="243.05" width="3.10" height="18.30" fill="#000"/>
<rect x="424.30" y="243.05" width="3.10" height="18.30" fill="#000"/>
<circle cx="458.50" cy="252.50" r="3.0" fill="#000"/>
<text x="402.50" y="199.80" font-family="Liberation Serif" font-size="9.5" fill="#000" text-anchor="start" textLength="42.8" lengthAdjust="spacingAndGlyphs" style="white-space:pre" >C41 100 nF</text>
<text x="394.00" y="240.10" font-family="Liberation Serif" font-size="9.5" fill="#000" text-anchor="start" textLength="58.4" lengthAdjust="spacingAndGlyphs" style="white-space:pre" >C40 10 uF Tant.</text>
<path d="M444.9,246.7h7M448.4,243.2v7" stroke="#000" stroke-width="1"/>
<path d="M577.80,215.30 L568.30,209.10 L568.30,221.50 Z" fill="none" stroke="#e2604e" stroke-width="1"/>
<polyline points="509.50,215.50 568.50,215.50" fill="none" stroke="#000" stroke-width="1.0" />
<rect x="537.70" y="206.15" width="3.10" height="18.30" fill="#000"/>
<rect x="543.80" y="206.15" width="3.10" height="18.30" fill="#000"/>
<circle cx="509.50" cy="215.50" r="3.0" fill="#000"/>
<path d="M577.80,249.30 L568.30,243.10 L568.30,255.50 Z" fill="none" stroke="#e2604e" stroke-width="1"/>
<polyline points="509.50,249.50 568.50,249.50" fill="none" stroke="#000" stroke-width="1.0" />
<rect x="537.70" y="240.15" width="3.10" height="18.30" fill="#000"/>
<rect x="543.80" y="240.15" width="3.10" height="18.30" fill="#000"/>
<circle cx="509.50" cy="249.50" r="3.0" fill="#000"/>
<text x="528.00" y="199.80" font-family="Liberation Serif" font-size="9.5" fill="#000" text-anchor="start" textLength="42.0" lengthAdjust="spacingAndGlyphs" style="white-space:pre" >C42 100 nF</text>
<text x="518.80" y="236.80" font-family="Liberation Serif" font-size="9.5" fill="#000" text-anchor="start" textLength="62.2" lengthAdjust="spacingAndGlyphs" style="white-space:pre" >C42a 10 uF Tant.</text>
<path d="M527.5,243.4h7M531,239.9v7" stroke="#000" stroke-width="1"/>
<circle cx="396.50" cy="276.50" r="3.0" fill="#000"/>
<circle cx="458.50" cy="276.50" r="3.0" fill="#000"/>
<circle cx="509.50" cy="276.50" r="3.0" fill="#000"/>
<text x="674.20" y="170.60" font-family="Liberation Serif" font-size="11.3" fill="#111" text-anchor="middle" font-weight="bold" style="white-space:pre" >2  BIT</text>
<text x="674.20" y="183.90" font-family="Liberation Serif" font-size="11.3" fill="#111" text-anchor="middle" font-weight="bold" style="white-space:pre" >QUADRATURE</text>
<text x="674.20" y="196.60" font-family="Liberation Serif" font-size="11.3" fill="#111" text-anchor="middle" font-weight="bold" style="white-space:pre" >GENERATOR</text>
<text x="674.20" y="209.70" font-family="Liberation Serif" font-size="11.3" fill="#111" text-anchor="middle" font-weight="bold" style="white-space:pre" >(DUAL D- TYPE</text>
<text x="674.20" y="221.40" font-family="Liberation Serif" font-size="11.3" fill="#111" text-anchor="middle" font-weight="bold" style="white-space:pre" >FLIP FLOP)</text>
<text x="588.80" y="241.90" font-family="Liberation Serif" font-size="11.3" fill="#111" text-anchor="start" font-weight="bold" textLength="164" lengthAdjust="spacingAndGlyphs" style="white-space:pre" >U13  PO74G74A (3V f&gt;600 Mhz) /</text>
<text x="587.80" y="253.60" font-family="Liberation Serif" font-size="11.3" fill="#111" text-anchor="start" font-weight="bold" textLength="166" lengthAdjust="spacingAndGlyphs" style="white-space:pre" >SN74LVC74A (3V fmax=150 Mhz)</text>
<rect x="790.50" y="172.50" width="126.00" height="65.00" fill="none" stroke="#000" stroke-width="1.2" />
<line x1="790.50" y1="185.50" x2="916.50" y2="185.50" stroke="#000" stroke-width="1.2"/>
<line x1="790.50" y1="194.50" x2="916.50" y2="194.50" stroke="#000" stroke-width="1.2"/>
<line x1="790.50" y1="203.50" x2="916.50" y2="203.50" stroke="#000" stroke-width="1.2"/>
<line x1="790.50" y1="214.50" x2="916.50" y2="214.50" stroke="#000" stroke-width="1.2"/>
<line x1="790.50" y1="224.50" x2="916.50" y2="224.50" stroke="#000" stroke-width="1.2"/>
<line x1="821.50" y1="185.50" x2="821.50" y2="237.50" stroke="#000" stroke-width="1.2"/>
<line x1="851.50" y1="185.50" x2="851.50" y2="237.50" stroke="#000" stroke-width="1.2"/>
<line x1="879.50" y1="185.50" x2="879.50" y2="237.50" stroke="#000" stroke-width="1.2"/>
<text x="796.80" y="181.80" font-family="Liberation Mono" font-size="8.8" fill="#111" text-anchor="start" textLength="115" lengthAdjust="spacingAndGlyphs" style="white-space:pre" >JOHNSON counter states</text>
<text x="807.20" y="192.60" font-family="Liberation Mono" font-size="8.8" fill="#111" text-anchor="middle" style="white-space:pre" >Q1</text>
<text x="836.30" y="192.60" font-family="Liberation Mono" font-size="8.8" fill="#111" text-anchor="middle" style="white-space:pre" >Q1n</text>
<text x="867.30" y="192.60" font-family="Liberation Mono" font-size="8.8" fill="#111" text-anchor="middle" style="white-space:pre" >Q2</text>
<text x="899.40" y="192.60" font-family="Liberation Mono" font-size="8.8" fill="#111" text-anchor="middle" style="white-space:pre" >Q2n</text>
<text x="807.20" y="203.20" font-family="Liberation Mono" font-size="8.8" fill="#111" text-anchor="middle" style="white-space:pre" >1</text>
<text x="836.30" y="203.20" font-family="Liberation Mono" font-size="8.8" fill="#111" text-anchor="middle" style="white-space:pre" >0</text>
<text x="867.30" y="203.20" font-family="Liberation Mono" font-size="8.8" fill="#111" text-anchor="middle" style="white-space:pre" >0</text>
<text x="899.40" y="203.20" font-family="Liberation Mono" font-size="8.8" fill="#111" text-anchor="middle" style="white-space:pre" >1</text>
<text x="807.20" y="213.30" font-family="Liberation Mono" font-size="8.8" fill="#111" text-anchor="middle" style="white-space:pre" >1</text>
<text x="836.30" y="213.30" font-family="Liberation Mono" font-size="8.8" fill="#111" text-anchor="middle" style="white-space:pre" >0</text>
<text x="867.30" y="213.30" font-family="Liberation Mono" font-size="8.8" fill="#111" text-anchor="middle" style="white-space:pre" >1</text>
<text x="899.40" y="213.30" font-family="Liberation Mono" font-size="8.8" fill="#111" text-anchor="middle" style="white-space:pre" >0</text>
<text x="807.20" y="223.20" font-family="Liberation Mono" font-size="8.8" fill="#111" text-anchor="middle" style="white-space:pre" >0</text>
<text x="836.30" y="223.20" font-family="Liberation Mono" font-size="8.8" fill="#111" text-anchor="middle" style="white-space:pre" >1</text>
<text x="867.30" y="223.20" font-family="Liberation Mono" font-size="8.8" fill="#111" text-anchor="middle" style="white-space:pre" >1</text>
<text x="899.40" y="223.20" font-family="Liberation Mono" font-size="8.8" fill="#111" text-anchor="middle" style="white-space:pre" >0</text>
<text x="807.20" y="233.40" font-family="Liberation Mono" font-size="8.8" fill="#111" text-anchor="middle" style="white-space:pre" >0</text>
<text x="836.30" y="233.40" font-family="Liberation Mono" font-size="8.8" fill="#111" text-anchor="middle" style="white-space:pre" >1</text>
<text x="867.30" y="233.40" font-family="Liberation Mono" font-size="8.8" fill="#111" text-anchor="middle" style="white-space:pre" >0</text>
<text x="899.40" y="233.40" font-family="Liberation Mono" font-size="8.8" fill="#111" text-anchor="middle" style="white-space:pre" >1</text>
<rect x="861.50" y="347.50" width="61.00" height="64.00" fill="none" stroke="#000" stroke-width="1.2" />
<line x1="861.50" y1="359.50" x2="922.50" y2="359.50" stroke="#000" stroke-width="1.2"/>
<line x1="861.50" y1="368.50" x2="922.50" y2="368.50" stroke="#000" stroke-width="1.2"/>
<line x1="861.50" y1="377.50" x2="922.50" y2="377.50" stroke="#000" stroke-width="1.2"/>
<line x1="861.50" y1="388.50" x2="922.50" y2="388.50" stroke="#000" stroke-width="1.2"/>
<line x1="861.50" y1="398.50" x2="922.50" y2="398.50" stroke="#000" stroke-width="1.2"/>
<line x1="891.50" y1="359.50" x2="891.50" y2="411.50" stroke="#000" stroke-width="1.2"/>
<text x="866.60" y="356.50" font-family="Liberation Mono" font-size="8.8" fill="#111" text-anchor="start" style="white-space:pre" >TX Clock</text>
<text x="877.00" y="366.70" font-family="Liberation Mono" font-size="8.8" fill="#111" text-anchor="middle" style="white-space:pre" >S1</text>
<text x="904.00" y="366.70" font-family="Liberation Mono" font-size="8.8" fill="#111" text-anchor="middle" style="white-space:pre" >S0</text>
<text x="879.60" y="376.60" font-family="Liberation Mono" font-size="8.8" fill="#111" text-anchor="middle" style="white-space:pre" >0</text>
<text x="906.00" y="376.60" font-family="Liberation Mono" font-size="8.8" fill="#111" text-anchor="middle" style="white-space:pre" >0</text>
<text x="879.60" y="386.10" font-family="Liberation Mono" font-size="8.8" fill="#111" text-anchor="middle" style="white-space:pre" >0</text>
<text x="906.00" y="386.10" font-family="Liberation Mono" font-size="8.8" fill="#111" text-anchor="middle" style="white-space:pre" >1</text>
<text x="879.60" y="396.90" font-family="Liberation Mono" font-size="8.8" fill="#111" text-anchor="middle" style="white-space:pre" >1</text>
<text x="906.00" y="396.90" font-family="Liberation Mono" font-size="8.8" fill="#111" text-anchor="middle" style="white-space:pre" >1</text>
<text x="879.60" y="407.70" font-family="Liberation Mono" font-size="8.8" fill="#111" text-anchor="middle" style="white-space:pre" >1</text>
<text x="906.00" y="407.70" font-family="Liberation Mono" font-size="8.8" fill="#111" text-anchor="middle" style="white-space:pre" >0</text>
<rect x="861.50" y="548.50" width="61.00" height="64.00" fill="none" stroke="#000" stroke-width="1.2" />
<line x1="861.50" y1="560.50" x2="922.50" y2="560.50" stroke="#000" stroke-width="1.2"/>
<line x1="861.50" y1="569.50" x2="922.50" y2="569.50" stroke="#000" stroke-width="1.2"/>
<line x1="861.50" y1="579.50" x2="922.50" y2="579.50" stroke="#000" stroke-width="1.2"/>
<line x1="861.50" y1="591.50" x2="922.50" y2="591.50" stroke="#000" stroke-width="1.2"/>
<line x1="861.50" y1="600.50" x2="922.50" y2="600.50" stroke="#000" stroke-width="1.2"/>
<line x1="891.50" y1="560.50" x2="891.50" y2="612.50" stroke="#000" stroke-width="1.2"/>
<text x="866.60" y="557.40" font-family="Liberation Mono" font-size="8.8" fill="#111" text-anchor="start" style="white-space:pre" >RX Clock</text>
<text x="877.00" y="567.60" font-family="Liberation Mono" font-size="8.8" fill="#111" text-anchor="middle" style="white-space:pre" >S1</text>
<text x="904.00" y="567.60" font-family="Liberation Mono" font-size="8.8" fill="#111" text-anchor="middle" style="white-space:pre" >S0</text>
<text x="879.60" y="578.50" font-family="Liberation Mono" font-size="8.8" fill="#111" text-anchor="middle" style="white-space:pre" >1</text>
<text x="906.00" y="578.50" font-family="Liberation Mono" font-size="8.8" fill="#111" text-anchor="middle" style="white-space:pre" >1</text>
<text x="879.60" y="589.20" font-family="Liberation Mono" font-size="8.8" fill="#111" text-anchor="middle" style="white-space:pre" >1</text>
<text x="906.00" y="589.20" font-family="Liberation Mono" font-size="8.8" fill="#111" text-anchor="middle" style="white-space:pre" >0</text>
<text x="879.60" y="599.20" font-family="Liberation Mono" font-size="8.8" fill="#111" text-anchor="middle" style="white-space:pre" >0</text>
<text x="906.00" y="599.20" font-family="Liberation Mono" font-size="8.8" fill="#111" text-anchor="middle" style="white-space:pre" >0</text>
<text x="879.60" y="609.10" font-family="Liberation Mono" font-size="8.8" fill="#111" text-anchor="middle" style="white-space:pre" >0</text>
<text x="906.00" y="609.10" font-family="Liberation Mono" font-size="8.8" fill="#111" text-anchor="middle" style="white-space:pre" >1</text>
<rect x="571.50" y="301.50" width="116.00" height="214.00" fill="none" stroke="#14ec14" stroke-width="1.2" />
<path d="M623.3,301.4 A5.5,5.5 0 0 0 634.3,301.4" fill="none" stroke="#14ec14" stroke-width="1"/>
<rect x="561.50" y="310.50" width="10.00" height="12.00" fill="none" stroke="#14ec14" stroke-width="1.1" />
<text x="566.50" y="320.40" font-family="Liberation Serif" font-size="10" fill="#14ec14" text-anchor="middle" style="white-space:pre" >1</text>
<rect x="687.50" y="310.50" width="9.00" height="12.00" fill="none" stroke="#14ec14" stroke-width="1.1" />
<text x="692.00" y="320.40" font-family="Liberation Serif" font-size="10" fill="#14ec14" text-anchor="middle" style="white-space:pre" >14</text>
<rect x="561.50" y="340.50" width="10.00" height="12.00" fill="none" stroke="#14ec14" stroke-width="1.1" />
<text x="566.50" y="351.00" font-family="Liberation Serif" font-size="10" fill="#14ec14" text-anchor="middle" style="white-space:pre" >2</text>
<rect x="687.50" y="340.50" width="9.00" height="12.00" fill="none" stroke="#14ec14" stroke-width="1.1" />
<text x="692.00" y="351.00" font-family="Liberation Serif" font-size="10" fill="#14ec14" text-anchor="middle" style="white-space:pre" >13</text>
<rect x="561.50" y="371.50" width="10.00" height="12.00" fill="none" stroke="#14ec14" stroke-width="1.1" />
<text x="566.50" y="381.40" font-family="Liberation Serif" font-size="10" fill="#14ec14" text-anchor="middle" style="white-space:pre" >3</text>
<rect x="687.50" y="371.50" width="9.00" height="12.00" fill="none" stroke="#14ec14" stroke-width="1.1" />
<text x="692.00" y="381.40" font-family="Liberation Serif" font-size="10" fill="#14ec14" text-anchor="middle" style="white-space:pre" >12</text>
<rect x="561.50" y="402.50" width="10.00" height="12.00" fill="none" stroke="#14ec14" stroke-width="1.1" />
<text x="566.50" y="412.20" font-family="Liberation Serif" font-size="10" fill="#14ec14" text-anchor="middle" style="white-space:pre" >4</text>
<rect x="687.50" y="402.50" width="9.00" height="12.00" fill="none" stroke="#14ec14" stroke-width="1.1" />
<text x="692.00" y="412.20" font-family="Liberation Serif" font-size="10" fill="#14ec14" text-anchor="middle" style="white-space:pre" >11</text>
<rect x="561.50" y="432.50" width="10.00" height="12.00" fill="none" stroke="#14ec14" stroke-width="1.1" />
<text x="566.50" y="442.30" font-family="Liberation Serif" font-size="10" fill="#14ec14" text-anchor="middle" style="white-space:pre" >5</text>
<rect x="687.50" y="432.50" width="9.00" height="12.00" fill="none" stroke="#14ec14" stroke-width="1.1" />
<text x="692.00" y="442.30" font-family="Liberation Serif" font-size="10" fill="#14ec14" text-anchor="middle" style="white-space:pre" >10</text>
<rect x="561.50" y="463.50" width="10.00" height="12.00" fill="none" stroke="#14ec14" stroke-width="1.1" />
<text x="566.50" y="473.10" font-family="Liberation Serif" font-size="10" fill="#14ec14" text-anchor="middle" style="white-space:pre" >6</text>
<rect x="687.50" y="463.50" width="9.00" height="12.00" fill="none" stroke="#14ec14" stroke-width="1.1" />
<text x="692.00" y="473.10" font-family="Liberation Serif" font-size="10" fill="#14ec14" text-anchor="middle" style="white-space:pre" >9</text>
<rect x="561.50" y="493.50" width="10.00" height="12.00" fill="none" stroke="#14ec14" stroke-width="1.1" />
<text x="566.50" y="503.20" font-family="Liberation Serif" font-size="10" fill="#14ec14" text-anchor="middle" style="white-space:pre" >7</text>
<rect x="687.50" y="493.50" width="9.00" height="12.00" fill="none" stroke="#14ec14" stroke-width="1.1" />
<text x="692.00" y="503.20" font-family="Liberation Serif" font-size="10" fill="#14ec14" text-anchor="middle" style="white-space:pre" >8</text>
<text x="574.00" y="318.20" font-family="Liberation Serif" font-size="9.4" fill="#14ec14" text-anchor="start" style="white-space:pre" >CLR1</text>
<text x="574.00" y="348.80" font-family="Liberation Serif" font-size="9.4" fill="#14ec14" text-anchor="start" style="white-space:pre" >D1</text>
<text x="574.00" y="379.20" font-family="Liberation Serif" font-size="9.4" fill="#14ec14" text-anchor="start" style="white-space:pre" >CLK1</text>
<text x="574.00" y="410.00" font-family="Liberation Serif" font-size="9.4" fill="#14ec14" text-anchor="start" style="white-space:pre" >PRE1</text>
<text x="574.00" y="440.10" font-family="Liberation Serif" font-size="9.4" fill="#14ec14" text-anchor="start" style="white-space:pre" >Q1</text>
<text x="574.00" y="470.90" font-family="Liberation Serif" font-size="9.4" fill="#14ec14" text-anchor="start" style="white-space:pre" >Q1n</text>
<text x="574.00" y="501.00" font-family="Liberation Serif" font-size="9.4" fill="#14ec14" text-anchor="start" style="white-space:pre" >Vss</text>
<text x="665.30" y="318.40" font-family="Liberation Serif" font-size="9.4" fill="#14ec14" text-anchor="start" style="white-space:pre" >Vcc</text>
<text x="665.30" y="349.00" font-family="Liberation Serif" font-size="9.4" fill="#14ec14" text-anchor="start" style="white-space:pre" >CLR2</text>
<text x="665.30" y="379.40" font-family="Liberation Serif" font-size="9.4" fill="#14ec14" text-anchor="start" style="white-space:pre" >D2</text>
<text x="665.30" y="410.20" font-family="Liberation Serif" font-size="9.4" fill="#14ec14" text-anchor="start" style="white-space:pre" >CLK2</text>
<text x="665.30" y="440.30" font-family="Liberation Serif" font-size="9.4" fill="#14ec14" text-anchor="start" style="white-space:pre" >PRE2</text>
<text x="665.30" y="471.10" font-family="Liberation Serif" font-size="9.4" fill="#14ec14" text-anchor="start" style="white-space:pre" >Q2</text>
<text x="665.30" y="501.20" font-family="Liberation Serif" font-size="9.4" fill="#14ec14" text-anchor="start" style="white-space:pre" >Q2n</text>
<rect x="607.50" y="340.50" width="43.00" height="37.00" fill="none" stroke="#000" stroke-width="1.1" />
<text x="610.60" y="349.00" font-family="Liberation Serif" font-size="10" fill="#14ec14" text-anchor="start" style="white-space:pre" >CLK</text>
<text x="632.10" y="349.00" font-family="Liberation Serif" font-size="10" fill="#14ec14" text-anchor="start" style="white-space:pre" >D1</text>
<text x="610.60" y="361.50" font-family="Liberation Serif" font-size="10" fill="#14ec14" text-anchor="start" style="white-space:pre" >PRE</text>
<text x="632.10" y="361.50" font-family="Liberation Serif" font-size="10" fill="#14ec14" text-anchor="start" style="white-space:pre" >CLR</text>
<text x="610.60" y="374.00" font-family="Liberation Serif" font-size="10" fill="#14ec14" text-anchor="start" style="white-space:pre" >Q1n</text>
<text x="632.10" y="374.00" font-family="Liberation Serif" font-size="10" fill="#14ec14" text-anchor="start" style="white-space:pre" >Q1</text>
<rect x="607.50" y="438.50" width="43.00" height="37.00" fill="none" stroke="#000" stroke-width="1.1" />
<text x="610.60" y="446.90" font-family="Liberation Serif" font-size="10" fill="#14ec14" text-anchor="start" style="white-space:pre" >D2</text>
<text x="632.10" y="446.90" font-family="Liberation Serif" font-size="10" fill="#14ec14" text-anchor="start" style="white-space:pre" >CLK</text>
<text x="610.60" y="459.00" font-family="Liberation Serif" font-size="10" fill="#14ec14" text-anchor="start" style="white-space:pre" >CLR</text>
<text x="632.10" y="459.00" font-family="Liberation Serif" font-size="10" fill="#14ec14" text-anchor="start" style="white-space:pre" >PRE</text>
<text x="610.60" y="472.00" font-family="Liberation Serif" font-size="10" fill="#14ec14" text-anchor="start" style="white-space:pre" >Q2</text>
<text x="632.10" y="472.00" font-family="Liberation Serif" font-size="10" fill="#14ec14" text-anchor="start" style="white-space:pre" >Q2n</text>
<polyline points="571.50,316.50 659.50,316.50 659.50,359.50 656.50,359.50" fill="none" stroke="#000" stroke-width="1.0" />
<polyline points="571.50,346.50 580.50,346.50 580.50,322.50 638.50,322.50 638.50,340.50" fill="none" stroke="#000" stroke-width="1.0" />
<polyline points="571.50,377.50 586.50,377.50 586.50,328.50 619.50,328.50 619.50,340.50" fill="none" stroke="#000" stroke-width="1.0" />
<polyline points="571.50,408.50 580.50,408.50 580.50,386.50 592.50,386.50 592.50,359.50 601.50,359.50" fill="none" stroke="#000" stroke-width="1.0" />
<polyline points="638.50,377.50 638.50,398.50 586.50,398.50 586.50,438.50 571.50,438.50" fill="none" stroke="#000" stroke-width="1.0" />
<polyline points="616.50,383.50 616.50,414.50 592.50,414.50 592.50,469.50 571.50,469.50" fill="none" stroke="#000" stroke-width="1.0" />
<polyline points="687.50,346.50 665.50,346.50 665.50,420.50 598.50,420.50 598.50,456.50 601.50,456.50" fill="none" stroke="#000" stroke-width="1.0" />
<polyline points="687.50,377.50 671.50,377.50 671.50,426.50 619.50,426.50 619.50,438.50" fill="none" stroke="#000" stroke-width="1.0" />
<polyline points="687.50,408.50 677.50,408.50 677.50,432.50 641.50,432.50 641.50,438.50" fill="none" stroke="#000" stroke-width="1.0" />
<polyline points="687.50,438.50 671.50,438.50 671.50,456.50 656.50,456.50" fill="none" stroke="#000" stroke-width="1.0" />
<polyline points="616.50,475.50 616.50,490.50 671.50,490.50 671.50,469.50 687.50,469.50" fill="none" stroke="#000" stroke-width="1.0" />
<polyline points="638.50,481.50 638.50,499.50 687.50,499.50" fill="none" stroke="#000" stroke-width="1.0" />
<circle cx="604.50" cy="359.50" r="3.3" fill="#fff" stroke="#777" stroke-width="1"/>
<circle cx="653.50" cy="359.50" r="3.3" fill="#fff" stroke="#777" stroke-width="1"/>
<circle cx="616.50" cy="380.50" r="3.3" fill="#fff" stroke="#777" stroke-width="1"/>
<circle cx="604.50" cy="456.50" r="3.3" fill="#fff" stroke="#777" stroke-width="1"/>
<circle cx="653.50" cy="456.50" r="3.3" fill="#fff" stroke="#777" stroke-width="1"/>
<circle cx="638.50" cy="478.50" r="3.3" fill="#fff" stroke="#777" stroke-width="1"/>
<polyline points="509.50,316.50 561.50,316.50" fill="none" stroke="#dc4418" stroke-width="1.0" />
<circle cx="509.50" cy="316.50" r="3.0" fill="#000"/>
<polyline points="696.50,316.50 729.50,316.50" fill="none" stroke="#dc4418" stroke-width="1.0" />
<circle cx="729.50" cy="316.50" r="3.0" fill="#000"/>
<polyline points="696.50,346.50 729.50,346.50" fill="none" stroke="#dc4418" stroke-width="1.0" />
<circle cx="729.50" cy="346.50" r="3.0" fill="#000"/>
<polyline points="561.50,346.50 540.50,346.50 540.50,288.50 793.50,288.50 793.50,499.50" fill="none" stroke="#e020e0" stroke-width="1.0" />
<polyline points="561.50,377.50 494.50,377.50 494.50,686.50 238.50,686.50 238.50,606.50 259.50,606.50" fill="none" stroke="#2a6cd8" stroke-width="1.0" />
<polyline points="494.50,545.50 708.50,545.50 708.50,408.50 696.50,408.50" fill="none" stroke="#2a6cd8" stroke-width="1.0" />
<circle cx="494.50" cy="545.50" r="3.0" fill="#000"/>
<polyline points="561.50,438.50 509.50,438.50 509.50,573.50 775.50,573.50 775.50,377.50 696.50,377.50" fill="none" stroke="#e41c24" stroke-width="1.0" />
<polyline points="561.50,469.50 528.50,469.50 528.50,560.50 760.50,560.50 760.50,468.50 818.50,468.50" fill="none" stroke="#f08428" stroke-width="1.0" />
<polyline points="561.50,499.50 549.50,499.50 549.50,518.50" fill="none" stroke="#000" stroke-width="1.0" />
<path d="M543.90,518.20 L555.10,518.20 L549.50,527.20 Z" fill="none" stroke="#e2604e" stroke-width="1"/>
<polyline points="696.50,469.50 745.50,469.50 745.50,438.50 818.50,438.50" fill="none" stroke="#9cae58" stroke-width="1.0" />
<polyline points="696.50,499.50 818.50,499.50" fill="none" stroke="#e020e0" stroke-width="1.0" />
<circle cx="793.50" cy="499.50" r="3.0" fill="#000"/>
<polyline points="775.50,529.50 818.50,529.50" fill="none" stroke="#e41c24" stroke-width="1.0" />
<circle cx="775.50" cy="529.50" r="3.0" fill="#000"/>
<text x="531.20" y="435.00" font-family="Liberation Serif" font-size="10" fill="#e41c24" text-anchor="start" style="white-space:pre" >CLK1</text>
<text x="531.20" y="465.20" font-family="Liberation Serif" font-size="10" fill="#f08428" text-anchor="start" style="white-space:pre" >CLK2</text>
<text x="711.00" y="465.40" font-family="Liberation Serif" font-size="10" fill="#9cae58" text-anchor="start" style="white-space:pre" >CLK3</text>
<text x="711.00" y="496.40" font-family="Liberation Serif" font-size="10" fill="#e020e0" text-anchor="start" style="white-space:pre" >CLK4</text>
<polyline points="818.50,438.50 821.70,432.90 827.50,444.60 833.60,432.90 839.50,444.60 846.10,432.90 849.30,438.50" fill="none" stroke="#3a3a3a" stroke-width="1.1" />
<polyline points="849.50,438.50 873.50,438.50" fill="none" stroke="#9cae58" stroke-width="1.0" />
<path d="M873.1,432.50 H922.6 L928.3,438.20 L922.6,443.90 H873.1 Z M922.6,432.50 V443.90" fill="none" stroke="#9cae58" stroke-width="1.1"/>
<text x="876.20" y="441.80" font-family="Liberation Serif" font-size="10" fill="#9cae58" text-anchor="start" textLength="43.3" lengthAdjust="spacingAndGlyphs" style="white-space:pre" >TX CLK S0</text>
<text x="821.40" y="425.90" font-family="Liberation Serif" font-size="10" fill="#111" text-anchor="start" textLength="28.2" lengthAdjust="spacingAndGlyphs" style="white-space:pre" >R24 0,0</text>
<polyline points="818.50,468.50 821.70,462.90 827.50,474.60 833.60,462.90 839.50,474.60 846.10,462.90 849.30,468.50" fill="none" stroke="#3a3a3a" stroke-width="1.1" />
<polyline points="849.50,468.50 873.50,468.50" fill="none" stroke="#f08428" stroke-width="1.0" />
<path d="M873.1,463.30 H922.6 L928.3,469.00 L922.6,474.70 H873.1 Z M922.6,463.30 V474.70" fill="none" stroke="#f08428" stroke-width="1.1"/>
<text x="876.20" y="472.60" font-family="Liberation Serif" font-size="10" fill="#f08428" text-anchor="start" textLength="43.3" lengthAdjust="spacingAndGlyphs" style="white-space:pre" >TX CLK S1</text>
<text x="821.40" y="456.70" font-family="Liberation Serif" font-size="10" fill="#111" text-anchor="start" textLength="28.2" lengthAdjust="spacingAndGlyphs" style="white-space:pre" >R25 0,0</text>
<polyline points="818.50,499.50 821.70,493.90 827.50,505.60 833.60,493.90 839.50,505.60 846.10,493.90 849.30,499.50" fill="none" stroke="#3a3a3a" stroke-width="1.1" />
<polyline points="849.50,499.50 873.50,499.50" fill="none" stroke="#e020e0" stroke-width="1.0" />
<path d="M873.1,493.50 H922.6 L928.3,499.20 L922.6,504.90 H873.1 Z M922.6,493.50 V504.90" fill="none" stroke="#e020e0" stroke-width="1.1"/>
<text x="876.20" y="502.80" font-family="Liberation Serif" font-size="10" fill="#e020e0" text-anchor="start" textLength="43.3" lengthAdjust="spacingAndGlyphs" style="white-space:pre" >RX CLK S0</text>
<text x="821.40" y="486.90" font-family="Liberation Serif" font-size="10" fill="#111" text-anchor="start" textLength="28.2" lengthAdjust="spacingAndGlyphs" style="white-space:pre" >R22 0,0</text>
<polyline points="818.50,529.50 821.70,523.90 827.50,535.60 833.60,523.90 839.50,535.60 846.10,523.90 849.30,529.50" fill="none" stroke="#3a3a3a" stroke-width="1.1" />
<polyline points="849.50,529.50 873.50,529.50" fill="none" stroke="#e41c24" stroke-width="1.0" />
<path d="M873.1,524.10 H922.6 L928.3,529.80 L922.6,535.50 H873.1 Z M922.6,524.10 V535.50" fill="none" stroke="#e41c24" stroke-width="1.1"/>
<text x="876.20" y="533.40" font-family="Liberation Serif" font-size="10" fill="#e41c24" text-anchor="start" textLength="43.3" lengthAdjust="spacingAndGlyphs" style="white-space:pre" >RX CLK S1</text>
<text x="821.40" y="517.50" font-family="Liberation Serif" font-size="10" fill="#111" text-anchor="start" textLength="28.2" lengthAdjust="spacingAndGlyphs" style="white-space:pre" >R23 0,0</text>
<rect x="265.50" y="499.50" width="86.00" height="122.00" fill="none" stroke="#14ec14" stroke-width="1.2" />
<path d="M303.10,499.40 A5.5,5.5 0 0 0 314.10,499.40" fill="none" stroke="#14ec14" stroke-width="1"/>
<rect x="259.50" y="509.50" width="6.00" height="12.00" fill="none" stroke="#14ec14" stroke-width="1.1" />
<text x="262.50" y="518.70" font-family="Liberation Serif" font-size="9.5" fill="#14ec14" text-anchor="middle" style="white-space:pre" >1</text>
<rect x="351.50" y="509.50" width="6.00" height="12.00" fill="none" stroke="#14ec14" stroke-width="1.1" />
<text x="354.70" y="518.70" font-family="Liberation Serif" font-size="9.5" fill="#14ec14" text-anchor="middle" style="white-space:pre" >8</text>
<rect x="259.50" y="539.50" width="6.00" height="12.00" fill="none" stroke="#14ec14" stroke-width="1.1" />
<text x="262.50" y="548.70" font-family="Liberation Serif" font-size="9.5" fill="#14ec14" text-anchor="middle" style="white-space:pre" >2</text>
<rect x="351.50" y="539.50" width="6.00" height="12.00" fill="none" stroke="#14ec14" stroke-width="1.1" />
<text x="354.70" y="548.70" font-family="Liberation Serif" font-size="9.5" fill="#14ec14" text-anchor="middle" style="white-space:pre" >7</text>
<rect x="259.50" y="570.50" width="6.00" height="12.00" fill="none" stroke="#14ec14" stroke-width="1.1" />
<text x="262.50" y="579.80" font-family="Liberation Serif" font-size="9.5" fill="#14ec14" text-anchor="middle" style="white-space:pre" >3</text>
<rect x="351.50" y="570.50" width="6.00" height="12.00" fill="none" stroke="#14ec14" stroke-width="1.1" />
<text x="354.70" y="579.80" font-family="Liberation Serif" font-size="9.5" fill="#14ec14" text-anchor="middle" style="white-space:pre" >6</text>
<rect x="259.50" y="600.50" width="6.00" height="12.00" fill="none" stroke="#14ec14" stroke-width="1.1" />
<text x="262.50" y="610.00" font-family="Liberation Serif" font-size="9.5" fill="#14ec14" text-anchor="middle" style="white-space:pre" >4</text>
<rect x="351.50" y="600.50" width="6.00" height="12.00" fill="none" stroke="#14ec14" stroke-width="1.1" />
<text x="354.70" y="610.00" font-family="Liberation Serif" font-size="9.5" fill="#14ec14" text-anchor="middle" style="white-space:pre" >5</text>
<text x="268.80" y="518.50" font-family="Liberation Serif" font-size="9.5" fill="#14ec14" text-anchor="start" style="white-space:pre" >NC</text>
<text x="268.80" y="548.50" font-family="Liberation Serif" font-size="9.5" fill="#14ec14" text-anchor="start" style="white-space:pre" >OE</text>
<text x="268.80" y="579.60" font-family="Liberation Serif" font-size="9.5" fill="#14ec14" text-anchor="start" style="white-space:pre" >Vss</text>
<text x="268.80" y="609.80" font-family="Liberation Serif" font-size="9.5" fill="#14ec14" text-anchor="start" style="white-space:pre" >CLK+</text>
<text x="329.60" y="518.50" font-family="Liberation Serif" font-size="9.5" fill="#14ec14" text-anchor="start" style="white-space:pre" >SCL</text>
<text x="329.60" y="548.50" font-family="Liberation Serif" font-size="9.5" fill="#14ec14" text-anchor="start" style="white-space:pre" >SDA</text>
<text x="329.60" y="579.60" font-family="Liberation Serif" font-size="9.5" fill="#14ec14" text-anchor="start" style="white-space:pre" >Vdd</text>
<text x="329.60" y="609.80" font-family="Liberation Serif" font-size="9.5" fill="#14ec14" text-anchor="start" style="white-space:pre" >CLK-</text>
<text x="311.20" y="480.20" font-family="Liberation Serif" font-size="11.3" fill="#111" text-anchor="middle" font-weight="bold" textLength="74.7" lengthAdjust="spacingAndGlyphs" style="white-space:pre" >OSCILLATOR</text>
<text x="311.40" y="495.10" font-family="Liberation Serif" font-size="11.3" fill="#111" text-anchor="middle" font-weight="bold" textLength="54.8" lengthAdjust="spacingAndGlyphs" style="white-space:pre" >U8  SIS 570</text>
<path d="M326.50,456.80 L336.00,450.60 L336.00,463.00 Z" fill="none" stroke="#e2604e" stroke-width="1"/>
<polyline points="336.50,456.50 378.50,456.50" fill="none" stroke="#000" stroke-width="1.0" />
<rect x="351.20" y="447.65" width="3.10" height="18.30" fill="#000"/>
<rect x="357.30" y="447.65" width="3.10" height="18.30" fill="#000"/>
<circle cx="378.50" cy="456.50" r="3.0" fill="#000"/>
<polyline points="396.50,456.50 439.50,456.50" fill="none" stroke="#000" stroke-width="1.0" />
<rect x="414.90" y="447.65" width="3.10" height="18.30" fill="#000"/>
<rect x="421.00" y="447.65" width="3.10" height="18.30" fill="#000"/>
<path d="M448.80,456.80 L439.30,450.60 L439.30,463.00 Z" fill="none" stroke="#e2604e" stroke-width="1"/>
<circle cx="396.50" cy="456.50" r="3.0" fill="#000"/>
<text x="335.30" y="442.10" font-family="Liberation Serif" font-size="9.5" fill="#000" text-anchor="start" textLength="38.1" lengthAdjust="spacingAndGlyphs" style="white-space:pre" >C18 10 pF</text>
<text x="399.70" y="442.10" font-family="Liberation Serif" font-size="9.5" fill="#000" text-anchor="start" textLength="38.1" lengthAdjust="spacingAndGlyphs" style="white-space:pre" >C19 10 pF</text>
<polyline points="396.50,490.50 412.50,490.50" fill="none" stroke="#000" stroke-width="1.0" />
<polyline points="412.50,490.50 415.70,484.90 421.50,496.60 427.60,484.90 433.50,496.60 440.10,484.90 443.30,490.50" fill="none" stroke="#3a3a3a" stroke-width="1.1" />
<polyline points="443.50,490.50 458.50,490.50" fill="none" stroke="#000" stroke-width="1.0" />
<circle cx="396.50" cy="490.50" r="3.0" fill="#000"/>
<circle cx="458.50" cy="490.50" r="3.0" fill="#000"/>
<polyline points="378.50,515.50 412.50,515.50" fill="none" stroke="#000" stroke-width="1.0" />
<polyline points="412.50,515.50 415.70,509.90 421.50,521.60 427.60,509.90 433.50,521.60 440.10,509.90 443.30,515.50" fill="none" stroke="#3a3a3a" stroke-width="1.1" />
<polyline points="443.50,515.50 458.50,515.50" fill="none" stroke="#000" stroke-width="1.0" />
<circle cx="378.50" cy="515.50" r="3.0" fill="#000"/>
<circle cx="458.50" cy="515.50" r="3.0" fill="#000"/>
<text x="408.50" y="481.10" font-family="Liberation Serif" font-size="9.5" fill="#000" text-anchor="start" textLength="39.5" lengthAdjust="spacingAndGlyphs" style="white-space:pre" >R20  4,7 K</text>
<text x="408.50" y="504.50" font-family="Liberation Serif" font-size="9.5" fill="#000" text-anchor="start" textLength="39.5" lengthAdjust="spacingAndGlyphs" style="white-space:pre" >R21  4,7 K</text>
<polyline points="259.50,515.50 231.50,515.50" fill="none" stroke="#000" stroke-width="1.0" />
<rect x="223.00" y="505.95" width="3.10" height="18.30" fill="#000"/>
<rect x="229.10" y="505.95" width="3.10" height="18.30" fill="#000"/>
<polyline points="223.50,515.50 195.50,515.50 195.50,603.50" fill="none" stroke="#000" stroke-width="1.0" />
<path d="M189.60,603.40 L200.80,603.40 L195.20,612.40 Z" fill="none" stroke="#e2604e" stroke-width="1"/>
<polyline points="259.50,576.50 195.50,576.50" fill="none" stroke="#000" stroke-width="1.0" />
<circle cx="195.50" cy="576.50" r="3.0" fill="#000"/>
<text x="215.70" y="490.80" font-family="Liberation Serif" font-size="9.5" fill="#000" text-anchor="start" style="white-space:pre" >C35</text>
<text x="215.70" y="500.70" font-family="Liberation Serif" font-size="9.5" fill="#000" text-anchor="start" style="white-space:pre" >10 nF</text>
<circle cx="418.50" cy="576.50" r="3.0" fill="#000"/>
<polyline points="418.50,576.50 418.50,604.50" fill="none" stroke="#000" stroke-width="1.0" />
<rect x="408.60" y="604.00" width="19.00" height="3.10" fill="#000"/>
<rect x="408.60" y="610.10" width="19.00" height="3.10" fill="#000"/>
<polyline points="418.50,613.50 418.50,643.50" fill="none" stroke="#000" stroke-width="1.0" />
<path d="M412.50,643.70 L423.70,643.70 L418.10,652.70 Z" fill="none" stroke="#e2604e" stroke-width="1"/>
<text x="420.60" y="625.00" font-family="Liberation Serif" font-size="9.5" fill="#000" text-anchor="start" style="white-space:pre" >C36</text>
<text x="420.60" y="634.40" font-family="Liberation Serif" font-size="9.5" fill="#000" text-anchor="start" style="white-space:pre" >100 nF</text>
<polyline points="287.50,686.50 290.70,680.90 296.50,692.60 302.60,680.90 308.50,692.60 315.10,680.90 318.30,686.50" fill="none" stroke="#3a3a3a" stroke-width="1.1" />
<text x="286.00" y="676.00" font-family="Liberation Serif" font-size="9.5" fill="#000" text-anchor="start" textLength="31.5" lengthAdjust="spacingAndGlyphs" style="white-space:pre" >R18 100</text>
<text x="311.20" y="647.80" font-family="Liberation Serif" font-size="11.3" fill="#b8652a" text-anchor="middle" font-weight="bold" textLength="56.3" lengthAdjust="spacingAndGlyphs" style="white-space:pre" >THERMAL</text>
<text x="311.20" y="661.20" font-family="Liberation Serif" font-size="11.3" fill="#b8652a" text-anchor="middle" font-weight="bold" textLength="53.5" lengthAdjust="spacingAndGlyphs" style="white-space:pre" >COUPLER</text>
<text x="659.20" y="597.60" font-family="Liberation Mono" font-size="8.9" fill="#111" text-anchor="start" style="white-space:pre" >Clock lines are 90°</text>
<text x="659.20" y="607.90" font-family="Liberation Mono" font-size="8.9" fill="#111" text-anchor="start" style="white-space:pre" >diff, not 180° by using</text>
<text x="659.20" y="618.30" font-family="Liberation Mono" font-size="8.9" fill="#111" text-anchor="start" style="white-space:pre" >the rule to keep traces</text>
<text x="659.20" y="628.60" font-family="Liberation Mono" font-size="8.9" fill="#111" text-anchor="start" style="white-space:pre" >impedance thae sames</text>
<rect x="788.50" y="683.50" width="177.00" height="36.00" fill="none" stroke="#000" stroke-width="1.3" />
<line x1="788.50" y1="695.50" x2="965.50" y2="695.50" stroke="#000" stroke-width="1.2"/>
<line x1="788.50" y1="707.50" x2="965.50" y2="707.50" stroke="#000" stroke-width="1.2"/>
<text x="791.80" y="692.20" font-family="Liberation Serif" font-size="10" fill="#111" text-anchor="start" font-weight="bold" textLength="107.5" lengthAdjust="spacingAndGlyphs" style="white-space:pre" >QRP Transceiver RF Board</text>
<text x="903.50" y="692.20" font-family="Liberation Serif" font-size="10" fill="#111" text-anchor="start" style="white-space:pre" >|</text>
<text x="791.80" y="704.00" font-family="Liberation Serif" font-size="10" fill="#111" text-anchor="start" textLength="161.7" lengthAdjust="spacingAndGlyphs" style="white-space:pre" >LOCAL OSCILL. &amp; QUADRATURE GEN.</text>
<text x="791.80" y="715.80" font-family="Liberation Serif" font-size="10" fill="#111" text-anchor="start" textLength="166.2" lengthAdjust="spacingAndGlyphs" style="white-space:pre" >Date 2016/12/09  Revision 01  |  Sheet 4 of 10</text>
<path d="M936,397.5h3M940,397.5h3M939.5,398v16M936,414.5h3M940,414.5h3" stroke="#000" stroke-width="1" fill="none"/></svg>
<div id="sb" class="abs">
  <div class="abs" style="left:1px;top:1px;width:15px;height:15px;background:#f2f1ea;border:1px solid #dedcd0;box-sizing:border-box;"></div>
  <svg class="abs" style="left:4px;top:5px" width="10" height="6"><path d="M1 5l4-4 4 4" stroke="#c8c8b8" stroke-width="1.6" fill="none"/></svg>
  <div class="abs" style="left:1px;top:638px;width:15px;height:16px;background:#f2f1ea;border:1px solid #dedcd0;box-sizing:border-box;"></div>
  <svg class="abs" style="left:4px;top:643px" width="10" height="6"><path d="M1 1l4 4 4-4" stroke="#c8c8b8" stroke-width="1.6" fill="none"/></svg>
</div>
<div id="task" class="abs"></div>
<div id="start" class="abs"></div>
<div class="abs" style="left:931px;top:738px;width:93px;height:4px;background:linear-gradient(#2aa8f8,#1890e8);border-left:1px solid #0a50b0"></div>
</body></html>
